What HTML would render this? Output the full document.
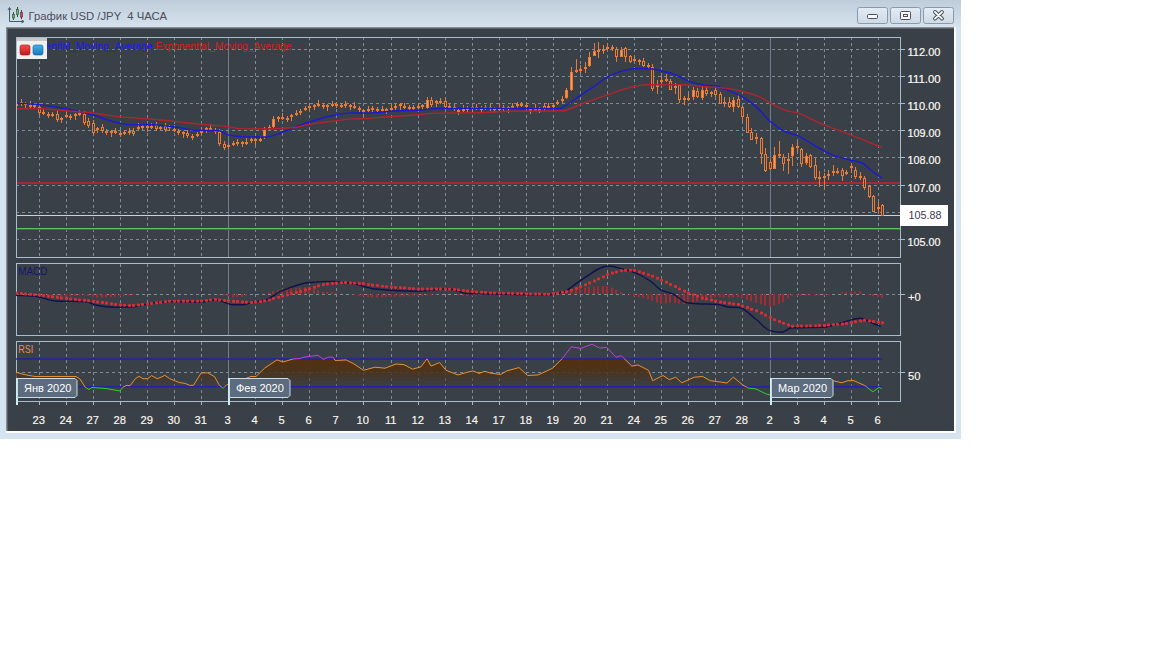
<!DOCTYPE html>
<html><head><meta charset="utf-8"><title>USD/JPY</title>
<style>html,body{margin:0;padding:0;background:#fff;width:1152px;height:648px;overflow:hidden;font-family:"Liberation Sans",sans-serif}</style>
</head><body>
<svg width="1152" height="648" viewBox="0 0 1152 648" style="display:block">
<defs>
<linearGradient id="tb" x1="0" y1="0" x2="0" y2="1"><stop offset="0" stop-color="#bfcdda"/><stop offset="1" stop-color="#d5e2ee"/></linearGradient>
<linearGradient id="btn" x1="0" y1="0" x2="0" y2="1"><stop offset="0" stop-color="#e4ecf4"/><stop offset="1" stop-color="#cdd9e5"/></linearGradient>
<linearGradient id="rsifill" gradientUnits="userSpaceOnUse" x1="0" y1="358" x2="0" y2="387"><stop offset="0" stop-color="#56300c"/><stop offset="0.48" stop-color="#4c3218" stop-opacity="0.88"/><stop offset="1" stop-color="#40383a" stop-opacity="0.2"/></linearGradient>
<linearGradient id="sqr" x1="0" y1="0" x2="0" y2="1"><stop offset="0" stop-color="#f05050"/><stop offset="1" stop-color="#c01818"/></linearGradient>
<linearGradient id="sqb" x1="0" y1="0" x2="0" y2="1"><stop offset="0" stop-color="#40b0e8"/><stop offset="1" stop-color="#1878b8"/></linearGradient>
<clipPath id="cmain"><rect x="16" y="37" width="884" height="220"/></clipPath>
<clipPath id="cmacd"><rect x="16" y="263" width="884" height="72"/></clipPath>
<clipPath id="crsi"><rect x="16" y="341" width="884" height="60"/></clipPath>
<clipPath id="cband"><rect x="16" y="359" width="884" height="28"/></clipPath>
</defs>
<rect x="0" y="0" width="1152" height="648" fill="#ffffff"/>
<rect x="0" y="0" width="961" height="439" fill="#d6e4f1"/>
<rect x="0" y="0" width="961" height="27" fill="url(#tb)"/>
<rect x="6" y="27" width="948" height="404" fill="#3a4048"/>
<rect x="6" y="27" width="948" height="1" fill="#848b92"/>
<rect x="6" y="28" width="948" height="1" fill="#5a6168"/>
<rect x="6" y="27" width="1" height="404" fill="#848b92"/>
<rect x="7" y="28" width="1" height="403" fill="#5a6168"/>
<rect x="954" y="27" width="2" height="406" fill="#ffffff"/>
<rect x="6" y="431" width="950" height="2" fill="#ffffff"/>
<line x1="39.5" y1="37" x2="39.5" y2="257" stroke="#7d8996" stroke-width="1" stroke-dasharray="3,3"/>
<line x1="66.5" y1="37" x2="66.5" y2="257" stroke="#7d8996" stroke-width="1" stroke-dasharray="3,3"/>
<line x1="93.5" y1="37" x2="93.5" y2="257" stroke="#7d8996" stroke-width="1" stroke-dasharray="3,3"/>
<line x1="120.5" y1="37" x2="120.5" y2="257" stroke="#7d8996" stroke-width="1" stroke-dasharray="3,3"/>
<line x1="147.5" y1="37" x2="147.5" y2="257" stroke="#7d8996" stroke-width="1" stroke-dasharray="3,3"/>
<line x1="174.5" y1="37" x2="174.5" y2="257" stroke="#7d8996" stroke-width="1" stroke-dasharray="3,3"/>
<line x1="201.5" y1="37" x2="201.5" y2="257" stroke="#7d8996" stroke-width="1" stroke-dasharray="3,3"/>
<line x1="255.5" y1="37" x2="255.5" y2="257" stroke="#7d8996" stroke-width="1" stroke-dasharray="3,3"/>
<line x1="282.5" y1="37" x2="282.5" y2="257" stroke="#7d8996" stroke-width="1" stroke-dasharray="3,3"/>
<line x1="309.5" y1="37" x2="309.5" y2="257" stroke="#7d8996" stroke-width="1" stroke-dasharray="3,3"/>
<line x1="336.5" y1="37" x2="336.5" y2="257" stroke="#7d8996" stroke-width="1" stroke-dasharray="3,3"/>
<line x1="363.5" y1="37" x2="363.5" y2="257" stroke="#7d8996" stroke-width="1" stroke-dasharray="3,3"/>
<line x1="391.5" y1="37" x2="391.5" y2="257" stroke="#7d8996" stroke-width="1" stroke-dasharray="3,3"/>
<line x1="418.5" y1="37" x2="418.5" y2="257" stroke="#7d8996" stroke-width="1" stroke-dasharray="3,3"/>
<line x1="445.5" y1="37" x2="445.5" y2="257" stroke="#7d8996" stroke-width="1" stroke-dasharray="3,3"/>
<line x1="472.5" y1="37" x2="472.5" y2="257" stroke="#7d8996" stroke-width="1" stroke-dasharray="3,3"/>
<line x1="499.5" y1="37" x2="499.5" y2="257" stroke="#7d8996" stroke-width="1" stroke-dasharray="3,3"/>
<line x1="526.5" y1="37" x2="526.5" y2="257" stroke="#7d8996" stroke-width="1" stroke-dasharray="3,3"/>
<line x1="553.5" y1="37" x2="553.5" y2="257" stroke="#7d8996" stroke-width="1" stroke-dasharray="3,3"/>
<line x1="580.5" y1="37" x2="580.5" y2="257" stroke="#7d8996" stroke-width="1" stroke-dasharray="3,3"/>
<line x1="607.5" y1="37" x2="607.5" y2="257" stroke="#7d8996" stroke-width="1" stroke-dasharray="3,3"/>
<line x1="634.5" y1="37" x2="634.5" y2="257" stroke="#7d8996" stroke-width="1" stroke-dasharray="3,3"/>
<line x1="661.5" y1="37" x2="661.5" y2="257" stroke="#7d8996" stroke-width="1" stroke-dasharray="3,3"/>
<line x1="688.5" y1="37" x2="688.5" y2="257" stroke="#7d8996" stroke-width="1" stroke-dasharray="3,3"/>
<line x1="715.5" y1="37" x2="715.5" y2="257" stroke="#7d8996" stroke-width="1" stroke-dasharray="3,3"/>
<line x1="742.5" y1="37" x2="742.5" y2="257" stroke="#7d8996" stroke-width="1" stroke-dasharray="3,3"/>
<line x1="797.5" y1="37" x2="797.5" y2="257" stroke="#7d8996" stroke-width="1" stroke-dasharray="3,3"/>
<line x1="824.5" y1="37" x2="824.5" y2="257" stroke="#7d8996" stroke-width="1" stroke-dasharray="3,3"/>
<line x1="851.5" y1="37" x2="851.5" y2="257" stroke="#7d8996" stroke-width="1" stroke-dasharray="3,3"/>
<line x1="878.5" y1="37" x2="878.5" y2="257" stroke="#7d8996" stroke-width="1" stroke-dasharray="3,3"/>
<line x1="16" y1="239.5" x2="900" y2="239.5" stroke="#7d8996" stroke-width="1" stroke-dasharray="3,3"/>
<line x1="16" y1="212.5" x2="900" y2="212.5" stroke="#7d8996" stroke-width="1" stroke-dasharray="3,3"/>
<line x1="16" y1="185.5" x2="900" y2="185.5" stroke="#7d8996" stroke-width="1" stroke-dasharray="3,3"/>
<line x1="16" y1="157.5" x2="900" y2="157.5" stroke="#7d8996" stroke-width="1" stroke-dasharray="3,3"/>
<line x1="16" y1="130.5" x2="900" y2="130.5" stroke="#7d8996" stroke-width="1" stroke-dasharray="3,3"/>
<line x1="16" y1="103.5" x2="900" y2="103.5" stroke="#7d8996" stroke-width="1" stroke-dasharray="3,3"/>
<line x1="16" y1="76.5" x2="900" y2="76.5" stroke="#7d8996" stroke-width="1" stroke-dasharray="3,3"/>
<line x1="16" y1="49.5" x2="900" y2="49.5" stroke="#7d8996" stroke-width="1" stroke-dasharray="3,3"/>
<line x1="39.5" y1="264" x2="39.5" y2="335" stroke="#7d8996" stroke-width="1" stroke-dasharray="3,3"/>
<line x1="66.5" y1="264" x2="66.5" y2="335" stroke="#7d8996" stroke-width="1" stroke-dasharray="3,3"/>
<line x1="93.5" y1="264" x2="93.5" y2="335" stroke="#7d8996" stroke-width="1" stroke-dasharray="3,3"/>
<line x1="120.5" y1="264" x2="120.5" y2="335" stroke="#7d8996" stroke-width="1" stroke-dasharray="3,3"/>
<line x1="147.5" y1="264" x2="147.5" y2="335" stroke="#7d8996" stroke-width="1" stroke-dasharray="3,3"/>
<line x1="174.5" y1="264" x2="174.5" y2="335" stroke="#7d8996" stroke-width="1" stroke-dasharray="3,3"/>
<line x1="201.5" y1="264" x2="201.5" y2="335" stroke="#7d8996" stroke-width="1" stroke-dasharray="3,3"/>
<line x1="255.5" y1="264" x2="255.5" y2="335" stroke="#7d8996" stroke-width="1" stroke-dasharray="3,3"/>
<line x1="282.5" y1="264" x2="282.5" y2="335" stroke="#7d8996" stroke-width="1" stroke-dasharray="3,3"/>
<line x1="309.5" y1="264" x2="309.5" y2="335" stroke="#7d8996" stroke-width="1" stroke-dasharray="3,3"/>
<line x1="336.5" y1="264" x2="336.5" y2="335" stroke="#7d8996" stroke-width="1" stroke-dasharray="3,3"/>
<line x1="363.5" y1="264" x2="363.5" y2="335" stroke="#7d8996" stroke-width="1" stroke-dasharray="3,3"/>
<line x1="391.5" y1="264" x2="391.5" y2="335" stroke="#7d8996" stroke-width="1" stroke-dasharray="3,3"/>
<line x1="418.5" y1="264" x2="418.5" y2="335" stroke="#7d8996" stroke-width="1" stroke-dasharray="3,3"/>
<line x1="445.5" y1="264" x2="445.5" y2="335" stroke="#7d8996" stroke-width="1" stroke-dasharray="3,3"/>
<line x1="472.5" y1="264" x2="472.5" y2="335" stroke="#7d8996" stroke-width="1" stroke-dasharray="3,3"/>
<line x1="499.5" y1="264" x2="499.5" y2="335" stroke="#7d8996" stroke-width="1" stroke-dasharray="3,3"/>
<line x1="526.5" y1="264" x2="526.5" y2="335" stroke="#7d8996" stroke-width="1" stroke-dasharray="3,3"/>
<line x1="553.5" y1="264" x2="553.5" y2="335" stroke="#7d8996" stroke-width="1" stroke-dasharray="3,3"/>
<line x1="580.5" y1="264" x2="580.5" y2="335" stroke="#7d8996" stroke-width="1" stroke-dasharray="3,3"/>
<line x1="607.5" y1="264" x2="607.5" y2="335" stroke="#7d8996" stroke-width="1" stroke-dasharray="3,3"/>
<line x1="634.5" y1="264" x2="634.5" y2="335" stroke="#7d8996" stroke-width="1" stroke-dasharray="3,3"/>
<line x1="661.5" y1="264" x2="661.5" y2="335" stroke="#7d8996" stroke-width="1" stroke-dasharray="3,3"/>
<line x1="688.5" y1="264" x2="688.5" y2="335" stroke="#7d8996" stroke-width="1" stroke-dasharray="3,3"/>
<line x1="715.5" y1="264" x2="715.5" y2="335" stroke="#7d8996" stroke-width="1" stroke-dasharray="3,3"/>
<line x1="742.5" y1="264" x2="742.5" y2="335" stroke="#7d8996" stroke-width="1" stroke-dasharray="3,3"/>
<line x1="797.5" y1="264" x2="797.5" y2="335" stroke="#7d8996" stroke-width="1" stroke-dasharray="3,3"/>
<line x1="824.5" y1="264" x2="824.5" y2="335" stroke="#7d8996" stroke-width="1" stroke-dasharray="3,3"/>
<line x1="851.5" y1="264" x2="851.5" y2="335" stroke="#7d8996" stroke-width="1" stroke-dasharray="3,3"/>
<line x1="878.5" y1="264" x2="878.5" y2="335" stroke="#7d8996" stroke-width="1" stroke-dasharray="3,3"/>
<line x1="16" y1="294.5" x2="900" y2="294.5" stroke="#7d8996" stroke-width="1" stroke-dasharray="3,3"/>
<line x1="39.5" y1="342" x2="39.5" y2="401" stroke="#7d8996" stroke-width="1" stroke-dasharray="3,3"/>
<line x1="66.5" y1="342" x2="66.5" y2="401" stroke="#7d8996" stroke-width="1" stroke-dasharray="3,3"/>
<line x1="93.5" y1="342" x2="93.5" y2="401" stroke="#7d8996" stroke-width="1" stroke-dasharray="3,3"/>
<line x1="120.5" y1="342" x2="120.5" y2="401" stroke="#7d8996" stroke-width="1" stroke-dasharray="3,3"/>
<line x1="147.5" y1="342" x2="147.5" y2="401" stroke="#7d8996" stroke-width="1" stroke-dasharray="3,3"/>
<line x1="174.5" y1="342" x2="174.5" y2="401" stroke="#7d8996" stroke-width="1" stroke-dasharray="3,3"/>
<line x1="201.5" y1="342" x2="201.5" y2="401" stroke="#7d8996" stroke-width="1" stroke-dasharray="3,3"/>
<line x1="255.5" y1="342" x2="255.5" y2="401" stroke="#7d8996" stroke-width="1" stroke-dasharray="3,3"/>
<line x1="282.5" y1="342" x2="282.5" y2="401" stroke="#7d8996" stroke-width="1" stroke-dasharray="3,3"/>
<line x1="309.5" y1="342" x2="309.5" y2="401" stroke="#7d8996" stroke-width="1" stroke-dasharray="3,3"/>
<line x1="336.5" y1="342" x2="336.5" y2="401" stroke="#7d8996" stroke-width="1" stroke-dasharray="3,3"/>
<line x1="363.5" y1="342" x2="363.5" y2="401" stroke="#7d8996" stroke-width="1" stroke-dasharray="3,3"/>
<line x1="391.5" y1="342" x2="391.5" y2="401" stroke="#7d8996" stroke-width="1" stroke-dasharray="3,3"/>
<line x1="418.5" y1="342" x2="418.5" y2="401" stroke="#7d8996" stroke-width="1" stroke-dasharray="3,3"/>
<line x1="445.5" y1="342" x2="445.5" y2="401" stroke="#7d8996" stroke-width="1" stroke-dasharray="3,3"/>
<line x1="472.5" y1="342" x2="472.5" y2="401" stroke="#7d8996" stroke-width="1" stroke-dasharray="3,3"/>
<line x1="499.5" y1="342" x2="499.5" y2="401" stroke="#7d8996" stroke-width="1" stroke-dasharray="3,3"/>
<line x1="526.5" y1="342" x2="526.5" y2="401" stroke="#7d8996" stroke-width="1" stroke-dasharray="3,3"/>
<line x1="553.5" y1="342" x2="553.5" y2="401" stroke="#7d8996" stroke-width="1" stroke-dasharray="3,3"/>
<line x1="580.5" y1="342" x2="580.5" y2="401" stroke="#7d8996" stroke-width="1" stroke-dasharray="3,3"/>
<line x1="607.5" y1="342" x2="607.5" y2="401" stroke="#7d8996" stroke-width="1" stroke-dasharray="3,3"/>
<line x1="634.5" y1="342" x2="634.5" y2="401" stroke="#7d8996" stroke-width="1" stroke-dasharray="3,3"/>
<line x1="661.5" y1="342" x2="661.5" y2="401" stroke="#7d8996" stroke-width="1" stroke-dasharray="3,3"/>
<line x1="688.5" y1="342" x2="688.5" y2="401" stroke="#7d8996" stroke-width="1" stroke-dasharray="3,3"/>
<line x1="715.5" y1="342" x2="715.5" y2="401" stroke="#7d8996" stroke-width="1" stroke-dasharray="3,3"/>
<line x1="742.5" y1="342" x2="742.5" y2="401" stroke="#7d8996" stroke-width="1" stroke-dasharray="3,3"/>
<line x1="797.5" y1="342" x2="797.5" y2="401" stroke="#7d8996" stroke-width="1" stroke-dasharray="3,3"/>
<line x1="824.5" y1="342" x2="824.5" y2="401" stroke="#7d8996" stroke-width="1" stroke-dasharray="3,3"/>
<line x1="851.5" y1="342" x2="851.5" y2="401" stroke="#7d8996" stroke-width="1" stroke-dasharray="3,3"/>
<line x1="878.5" y1="342" x2="878.5" y2="401" stroke="#7d8996" stroke-width="1" stroke-dasharray="3,3"/>
<line x1="16" y1="372.5" x2="900" y2="372.5" stroke="#7d8996" stroke-width="1" stroke-dasharray="3,3"/>
<line x1="228.5" y1="38" x2="228.5" y2="257" stroke="#6f7f8f" stroke-width="1"/>
<line x1="228.5" y1="264" x2="228.5" y2="335" stroke="#6f7f8f" stroke-width="1"/>
<line x1="228.5" y1="342" x2="228.5" y2="401" stroke="#6f7f8f" stroke-width="1"/>
<line x1="770.5" y1="38" x2="770.5" y2="257" stroke="#6f7f8f" stroke-width="1"/>
<line x1="770.5" y1="264" x2="770.5" y2="335" stroke="#6f7f8f" stroke-width="1"/>
<line x1="770.5" y1="342" x2="770.5" y2="401" stroke="#6f7f8f" stroke-width="1"/>
<g clip-path="url(#cmain)">
<rect x="16" y="182" width="884" height="2" fill="#a8282e"/>
<rect x="16" y="215" width="884" height="1" fill="#d0d0d0"/>
<rect x="16" y="228" width="884" height="1" fill="#56c656"/>
<rect x="16" y="229" width="884" height="1" fill="#1c8a1c"/>
<rect x="16" y="102" width="1" height="5" fill="#ea7a34"/>
<rect x="15" y="104" width="3" height="2" fill="#ea7a34"/>
<rect x="21" y="99" width="1" height="7" fill="#ea7a34"/>
<rect x="20" y="102" width="3" height="2" fill="#ea7a34"/>
<rect x="25" y="102" width="1" height="6" fill="#ea7a34"/>
<rect x="24" y="103" width="3" height="2" fill="#ea7a34"/>
<rect x="30" y="101" width="1" height="7" fill="#ea7a34"/>
<rect x="29" y="105" width="3" height="2" fill="#ea7a34"/>
<rect x="34" y="103" width="1" height="6" fill="#ea7a34"/>
<rect x="33" y="105" width="3" height="2" fill="#ea7a34"/>
<rect x="39" y="104" width="1" height="11" fill="#ea7a34"/>
<rect x="38.5" y="107.5" width="2" height="5" fill="#3a4048" stroke="#ea7a34" stroke-width="1"/>
<rect x="43" y="109" width="1" height="6" fill="#ea7a34"/>
<rect x="42" y="112" width="3" height="2" fill="#ea7a34"/>
<rect x="48" y="112" width="1" height="6" fill="#ea7a34"/>
<rect x="47" y="114" width="3" height="2" fill="#ea7a34"/>
<rect x="52" y="112" width="1" height="5" fill="#ea7a34"/>
<rect x="51" y="114" width="3" height="2" fill="#ea7a34"/>
<rect x="57" y="111" width="1" height="11" fill="#ea7a34"/>
<rect x="56.5" y="114.5" width="2" height="5" fill="#3a4048" stroke="#ea7a34" stroke-width="1"/>
<rect x="61" y="117" width="1" height="6" fill="#ea7a34"/>
<rect x="60" y="118" width="3" height="2" fill="#ea7a34"/>
<rect x="66" y="111" width="1" height="7" fill="#ea7a34"/>
<rect x="65" y="115" width="3" height="2" fill="#ea7a34"/>
<rect x="70" y="114" width="1" height="6" fill="#ea7a34"/>
<rect x="69" y="116" width="3" height="2" fill="#ea7a34"/>
<rect x="75" y="113" width="1" height="7" fill="#ea7a34"/>
<rect x="74" y="114" width="3" height="2" fill="#ea7a34"/>
<rect x="79" y="110" width="1" height="6" fill="#ea7a34"/>
<rect x="78" y="113" width="3" height="2" fill="#ea7a34"/>
<rect x="84" y="111" width="1" height="14" fill="#ea7a34"/>
<rect x="83.5" y="114.5" width="2" height="8" fill="#3a4048" stroke="#ea7a34" stroke-width="1"/>
<rect x="88" y="118" width="1" height="10" fill="#ea7a34"/>
<rect x="87.5" y="121.5" width="2" height="4" fill="#3a4048" stroke="#ea7a34" stroke-width="1"/>
<rect x="93" y="120" width="1" height="15" fill="#ea7a34"/>
<rect x="92.5" y="123.5" width="2" height="9" fill="#3a4048" stroke="#ea7a34" stroke-width="1"/>
<rect x="97" y="127" width="1" height="6" fill="#ea7a34"/>
<rect x="96" y="128" width="3" height="2" fill="#ea7a34"/>
<rect x="102" y="124" width="1" height="9" fill="#ea7a34"/>
<rect x="101.5" y="127.5" width="2" height="3" fill="#3a4048" stroke="#ea7a34" stroke-width="1"/>
<rect x="106" y="129" width="1" height="6" fill="#ea7a34"/>
<rect x="105" y="131" width="3" height="2" fill="#ea7a34"/>
<rect x="111" y="130" width="1" height="7" fill="#ea7a34"/>
<rect x="110" y="131" width="3" height="2" fill="#ea7a34"/>
<rect x="115" y="128" width="1" height="6" fill="#ea7a34"/>
<rect x="114" y="131" width="3" height="2" fill="#ea7a34"/>
<rect x="120" y="131" width="1" height="6" fill="#ea7a34"/>
<rect x="119" y="133" width="3" height="2" fill="#ea7a34"/>
<rect x="124" y="130" width="1" height="5" fill="#ea7a34"/>
<rect x="123" y="132" width="3" height="2" fill="#ea7a34"/>
<rect x="129" y="128" width="1" height="7" fill="#ea7a34"/>
<rect x="128" y="131" width="3" height="2" fill="#ea7a34"/>
<rect x="133" y="128" width="1" height="8" fill="#ea7a34"/>
<rect x="132.5" y="131.5" width="2" height="2" fill="#3a4048" stroke="#ea7a34" stroke-width="1"/>
<rect x="138" y="123" width="1" height="7" fill="#ea7a34"/>
<rect x="137" y="127" width="3" height="2" fill="#ea7a34"/>
<rect x="142" y="124" width="1" height="6" fill="#ea7a34"/>
<rect x="141" y="126" width="3" height="2" fill="#ea7a34"/>
<rect x="147" y="125" width="1" height="7" fill="#ea7a34"/>
<rect x="146" y="126" width="3" height="2" fill="#ea7a34"/>
<rect x="151" y="123" width="1" height="6" fill="#ea7a34"/>
<rect x="150" y="126" width="3" height="2" fill="#ea7a34"/>
<rect x="156" y="122" width="1" height="9" fill="#ea7a34"/>
<rect x="155.5" y="125.5" width="2" height="3" fill="#3a4048" stroke="#ea7a34" stroke-width="1"/>
<rect x="160" y="125" width="1" height="5" fill="#ea7a34"/>
<rect x="159" y="127" width="3" height="2" fill="#ea7a34"/>
<rect x="165" y="123" width="1" height="9" fill="#ea7a34"/>
<rect x="164.5" y="126.5" width="2" height="3" fill="#3a4048" stroke="#ea7a34" stroke-width="1"/>
<rect x="169" y="125" width="1" height="6" fill="#ea7a34"/>
<rect x="168" y="126" width="3" height="2" fill="#ea7a34"/>
<rect x="174" y="125" width="1" height="7" fill="#ea7a34"/>
<rect x="173" y="129" width="3" height="2" fill="#ea7a34"/>
<rect x="178" y="129" width="1" height="6" fill="#ea7a34"/>
<rect x="177" y="131" width="3" height="2" fill="#ea7a34"/>
<rect x="183" y="131" width="1" height="7" fill="#ea7a34"/>
<rect x="182" y="132" width="3" height="2" fill="#ea7a34"/>
<rect x="187" y="130" width="1" height="8" fill="#ea7a34"/>
<rect x="186.5" y="133.5" width="2" height="2" fill="#3a4048" stroke="#ea7a34" stroke-width="1"/>
<rect x="192" y="134" width="1" height="6" fill="#ea7a34"/>
<rect x="191" y="136" width="3" height="2" fill="#ea7a34"/>
<rect x="197" y="132" width="1" height="5" fill="#ea7a34"/>
<rect x="196" y="134" width="3" height="2" fill="#ea7a34"/>
<rect x="201" y="128" width="1" height="7" fill="#ea7a34"/>
<rect x="200" y="131" width="3" height="2" fill="#ea7a34"/>
<rect x="206" y="127" width="1" height="6" fill="#ea7a34"/>
<rect x="205" y="128" width="3" height="2" fill="#ea7a34"/>
<rect x="210" y="124" width="1" height="7" fill="#ea7a34"/>
<rect x="209" y="128" width="3" height="2" fill="#ea7a34"/>
<rect x="215" y="128" width="1" height="6" fill="#ea7a34"/>
<rect x="214" y="130" width="3" height="2" fill="#ea7a34"/>
<rect x="219" y="129" width="1" height="17" fill="#ea7a34"/>
<rect x="218.5" y="132.5" width="2" height="11" fill="#3a4048" stroke="#ea7a34" stroke-width="1"/>
<rect x="224" y="141" width="1" height="9" fill="#ea7a34"/>
<rect x="223.5" y="144.5" width="2" height="3" fill="#3a4048" stroke="#ea7a34" stroke-width="1"/>
<rect x="228" y="143" width="1" height="6" fill="#ea7a34"/>
<rect x="227" y="145" width="3" height="2" fill="#ea7a34"/>
<rect x="233" y="141" width="1" height="5" fill="#ea7a34"/>
<rect x="232" y="143" width="3" height="2" fill="#ea7a34"/>
<rect x="237" y="139" width="1" height="7" fill="#ea7a34"/>
<rect x="236" y="142" width="3" height="2" fill="#ea7a34"/>
<rect x="242" y="141" width="1" height="6" fill="#ea7a34"/>
<rect x="241" y="142" width="3" height="2" fill="#ea7a34"/>
<rect x="246" y="138" width="1" height="7" fill="#ea7a34"/>
<rect x="245" y="142" width="3" height="2" fill="#ea7a34"/>
<rect x="251" y="137" width="1" height="6" fill="#ea7a34"/>
<rect x="250" y="139" width="3" height="2" fill="#ea7a34"/>
<rect x="255" y="138" width="1" height="7" fill="#ea7a34"/>
<rect x="254" y="139" width="3" height="2" fill="#ea7a34"/>
<rect x="260" y="136" width="1" height="6" fill="#ea7a34"/>
<rect x="259" y="139" width="3" height="2" fill="#ea7a34"/>
<rect x="264" y="127" width="1" height="12" fill="#ea7a34"/>
<rect x="263.5" y="130.5" width="2" height="6" fill="#f89a58" stroke="#ea7a34" stroke-width="1"/>
<rect x="269" y="125" width="1" height="5" fill="#ea7a34"/>
<rect x="268" y="127" width="3" height="2" fill="#ea7a34"/>
<rect x="273" y="116" width="1" height="13" fill="#ea7a34"/>
<rect x="272.5" y="119.5" width="2" height="7" fill="#f89a58" stroke="#ea7a34" stroke-width="1"/>
<rect x="278" y="116" width="1" height="6" fill="#ea7a34"/>
<rect x="277" y="117" width="3" height="2" fill="#ea7a34"/>
<rect x="282" y="113" width="1" height="7" fill="#ea7a34"/>
<rect x="281" y="117" width="3" height="2" fill="#ea7a34"/>
<rect x="287" y="116" width="1" height="6" fill="#ea7a34"/>
<rect x="286" y="118" width="3" height="2" fill="#ea7a34"/>
<rect x="291" y="114" width="1" height="7" fill="#ea7a34"/>
<rect x="290" y="115" width="3" height="2" fill="#ea7a34"/>
<rect x="296" y="110" width="1" height="6" fill="#ea7a34"/>
<rect x="295" y="113" width="3" height="2" fill="#ea7a34"/>
<rect x="300" y="109" width="1" height="6" fill="#ea7a34"/>
<rect x="299" y="111" width="3" height="2" fill="#ea7a34"/>
<rect x="305" y="106" width="1" height="5" fill="#ea7a34"/>
<rect x="304" y="108" width="3" height="2" fill="#ea7a34"/>
<rect x="309" y="103" width="1" height="7" fill="#ea7a34"/>
<rect x="308" y="106" width="3" height="2" fill="#ea7a34"/>
<rect x="314" y="104" width="1" height="6" fill="#ea7a34"/>
<rect x="313" y="105" width="3" height="2" fill="#ea7a34"/>
<rect x="318" y="100" width="1" height="7" fill="#ea7a34"/>
<rect x="317" y="104" width="3" height="2" fill="#ea7a34"/>
<rect x="323" y="103" width="1" height="6" fill="#ea7a34"/>
<rect x="322" y="105" width="3" height="2" fill="#ea7a34"/>
<rect x="327" y="104" width="1" height="7" fill="#ea7a34"/>
<rect x="326" y="105" width="3" height="2" fill="#ea7a34"/>
<rect x="332" y="101" width="1" height="6" fill="#ea7a34"/>
<rect x="331" y="104" width="3" height="2" fill="#ea7a34"/>
<rect x="336" y="102" width="1" height="6" fill="#ea7a34"/>
<rect x="335" y="104" width="3" height="2" fill="#ea7a34"/>
<rect x="341" y="103" width="1" height="5" fill="#ea7a34"/>
<rect x="340" y="105" width="3" height="2" fill="#ea7a34"/>
<rect x="345" y="101" width="1" height="7" fill="#ea7a34"/>
<rect x="344" y="104" width="3" height="2" fill="#ea7a34"/>
<rect x="350" y="104" width="1" height="6" fill="#ea7a34"/>
<rect x="349" y="105" width="3" height="2" fill="#ea7a34"/>
<rect x="354" y="102" width="1" height="7" fill="#ea7a34"/>
<rect x="353" y="106" width="3" height="2" fill="#ea7a34"/>
<rect x="359" y="106" width="1" height="6" fill="#ea7a34"/>
<rect x="358" y="108" width="3" height="2" fill="#ea7a34"/>
<rect x="363" y="109" width="1" height="7" fill="#ea7a34"/>
<rect x="362" y="110" width="3" height="2" fill="#ea7a34"/>
<rect x="368" y="106" width="1" height="6" fill="#ea7a34"/>
<rect x="367" y="109" width="3" height="2" fill="#ea7a34"/>
<rect x="372" y="106" width="1" height="6" fill="#ea7a34"/>
<rect x="371" y="108" width="3" height="2" fill="#ea7a34"/>
<rect x="377" y="107" width="1" height="5" fill="#ea7a34"/>
<rect x="376" y="109" width="3" height="2" fill="#ea7a34"/>
<rect x="382" y="106" width="1" height="7" fill="#ea7a34"/>
<rect x="381" y="109" width="3" height="2" fill="#ea7a34"/>
<rect x="386" y="108" width="1" height="6" fill="#ea7a34"/>
<rect x="385" y="109" width="3" height="2" fill="#ea7a34"/>
<rect x="391" y="104" width="1" height="7" fill="#ea7a34"/>
<rect x="390" y="108" width="3" height="2" fill="#ea7a34"/>
<rect x="395" y="104" width="1" height="6" fill="#ea7a34"/>
<rect x="394" y="106" width="3" height="2" fill="#ea7a34"/>
<rect x="400" y="103" width="1" height="7" fill="#ea7a34"/>
<rect x="399" y="104" width="3" height="2" fill="#ea7a34"/>
<rect x="404" y="103" width="1" height="6" fill="#ea7a34"/>
<rect x="403" y="106" width="3" height="2" fill="#ea7a34"/>
<rect x="409" y="105" width="1" height="6" fill="#ea7a34"/>
<rect x="408" y="107" width="3" height="2" fill="#ea7a34"/>
<rect x="413" y="105" width="1" height="5" fill="#ea7a34"/>
<rect x="412" y="107" width="3" height="2" fill="#ea7a34"/>
<rect x="418" y="103" width="1" height="7" fill="#ea7a34"/>
<rect x="417" y="106" width="3" height="2" fill="#ea7a34"/>
<rect x="422" y="104" width="1" height="6" fill="#ea7a34"/>
<rect x="421" y="105" width="3" height="2" fill="#ea7a34"/>
<rect x="427" y="97" width="1" height="13" fill="#ea7a34"/>
<rect x="426.5" y="100.5" width="2" height="7" fill="#f89a58" stroke="#ea7a34" stroke-width="1"/>
<rect x="431" y="97" width="1" height="10" fill="#ea7a34"/>
<rect x="430.5" y="100.5" width="2" height="4" fill="#3a4048" stroke="#ea7a34" stroke-width="1"/>
<rect x="436" y="100" width="1" height="7" fill="#ea7a34"/>
<rect x="435" y="101" width="3" height="2" fill="#ea7a34"/>
<rect x="440" y="98" width="1" height="6" fill="#ea7a34"/>
<rect x="439" y="101" width="3" height="2" fill="#ea7a34"/>
<rect x="445" y="98" width="1" height="11" fill="#ea7a34"/>
<rect x="444.5" y="101.5" width="2" height="5" fill="#3a4048" stroke="#ea7a34" stroke-width="1"/>
<rect x="449" y="104" width="1" height="5" fill="#ea7a34"/>
<rect x="448" y="106" width="3" height="2" fill="#ea7a34"/>
<rect x="454" y="104" width="1" height="7" fill="#ea7a34"/>
<rect x="453" y="107" width="3" height="2" fill="#ea7a34"/>
<rect x="458" y="109" width="1" height="6" fill="#ea7a34"/>
<rect x="457" y="110" width="3" height="2" fill="#ea7a34"/>
<rect x="463" y="105" width="1" height="7" fill="#ea7a34"/>
<rect x="462" y="109" width="3" height="2" fill="#ea7a34"/>
<rect x="467" y="106" width="1" height="6" fill="#ea7a34"/>
<rect x="466" y="108" width="3" height="2" fill="#ea7a34"/>
<rect x="472" y="106" width="1" height="7" fill="#ea7a34"/>
<rect x="471" y="107" width="3" height="2" fill="#ea7a34"/>
<rect x="476" y="104" width="1" height="6" fill="#ea7a34"/>
<rect x="475" y="107" width="3" height="2" fill="#ea7a34"/>
<rect x="481" y="106" width="1" height="6" fill="#ea7a34"/>
<rect x="480" y="108" width="3" height="2" fill="#ea7a34"/>
<rect x="485" y="105" width="1" height="5" fill="#ea7a34"/>
<rect x="484" y="107" width="3" height="2" fill="#ea7a34"/>
<rect x="490" y="104" width="1" height="7" fill="#ea7a34"/>
<rect x="489" y="107" width="3" height="2" fill="#ea7a34"/>
<rect x="494" y="107" width="1" height="6" fill="#ea7a34"/>
<rect x="493" y="108" width="3" height="2" fill="#ea7a34"/>
<rect x="499" y="104" width="1" height="7" fill="#ea7a34"/>
<rect x="498" y="108" width="3" height="2" fill="#ea7a34"/>
<rect x="503" y="105" width="1" height="6" fill="#ea7a34"/>
<rect x="502" y="107" width="3" height="2" fill="#ea7a34"/>
<rect x="508" y="106" width="1" height="7" fill="#ea7a34"/>
<rect x="507" y="107" width="3" height="2" fill="#ea7a34"/>
<rect x="512" y="103" width="1" height="6" fill="#ea7a34"/>
<rect x="511" y="106" width="3" height="2" fill="#ea7a34"/>
<rect x="517" y="102" width="1" height="6" fill="#ea7a34"/>
<rect x="516" y="104" width="3" height="2" fill="#ea7a34"/>
<rect x="521" y="102" width="1" height="5" fill="#ea7a34"/>
<rect x="520" y="104" width="3" height="2" fill="#ea7a34"/>
<rect x="526" y="102" width="1" height="7" fill="#ea7a34"/>
<rect x="525" y="105" width="3" height="2" fill="#ea7a34"/>
<rect x="530" y="108" width="1" height="6" fill="#ea7a34"/>
<rect x="529" y="109" width="3" height="2" fill="#ea7a34"/>
<rect x="535" y="104" width="1" height="7" fill="#ea7a34"/>
<rect x="534" y="108" width="3" height="2" fill="#ea7a34"/>
<rect x="539" y="107" width="1" height="6" fill="#ea7a34"/>
<rect x="538" y="109" width="3" height="2" fill="#ea7a34"/>
<rect x="544" y="103" width="1" height="8" fill="#ea7a34"/>
<rect x="543.5" y="106.5" width="2" height="2" fill="#3a4048" stroke="#ea7a34" stroke-width="1"/>
<rect x="548" y="103" width="1" height="6" fill="#ea7a34"/>
<rect x="547" y="106" width="3" height="2" fill="#ea7a34"/>
<rect x="553" y="103" width="1" height="6" fill="#ea7a34"/>
<rect x="552" y="105" width="3" height="2" fill="#ea7a34"/>
<rect x="557" y="100" width="1" height="5" fill="#ea7a34"/>
<rect x="556" y="102" width="3" height="2" fill="#ea7a34"/>
<rect x="562" y="96" width="1" height="7" fill="#ea7a34"/>
<rect x="561" y="99" width="3" height="2" fill="#ea7a34"/>
<rect x="566" y="88" width="1" height="11" fill="#ea7a34"/>
<rect x="565.5" y="90.5" width="2" height="7" fill="#f89a58" stroke="#ea7a34" stroke-width="1"/>
<rect x="571" y="67" width="1" height="24" fill="#ea7a34"/>
<rect x="570.5" y="72.5" width="2" height="17" fill="#f89a58" stroke="#ea7a34" stroke-width="1"/>
<rect x="576" y="59" width="1" height="14" fill="#ea7a34"/>
<rect x="575" y="70" width="3" height="2" fill="#ea7a34"/>
<rect x="580" y="65" width="1" height="8" fill="#ea7a34"/>
<rect x="579" y="69" width="3" height="2" fill="#ea7a34"/>
<rect x="585" y="62" width="1" height="11" fill="#ea7a34"/>
<rect x="584" y="67" width="3" height="2" fill="#ea7a34"/>
<rect x="589" y="52" width="1" height="15" fill="#ea7a34"/>
<rect x="588.5" y="57.5" width="2" height="8" fill="#f89a58" stroke="#ea7a34" stroke-width="1"/>
<rect x="594" y="43" width="1" height="13" fill="#ea7a34"/>
<rect x="593.5" y="51.5" width="2" height="4" fill="#f89a58" stroke="#ea7a34" stroke-width="1"/>
<rect x="598" y="42" width="1" height="16" fill="#ea7a34"/>
<rect x="597" y="50" width="3" height="2" fill="#ea7a34"/>
<rect x="603" y="45" width="1" height="9" fill="#ea7a34"/>
<rect x="602" y="49" width="3" height="2" fill="#ea7a34"/>
<rect x="607" y="43" width="1" height="7" fill="#ea7a34"/>
<rect x="606" y="47" width="3" height="2" fill="#ea7a34"/>
<rect x="612" y="45" width="1" height="6" fill="#ea7a34"/>
<rect x="611" y="47" width="3" height="2" fill="#ea7a34"/>
<rect x="616" y="47" width="1" height="15" fill="#ea7a34"/>
<rect x="615.5" y="49.5" width="2" height="7" fill="#3a4048" stroke="#ea7a34" stroke-width="1"/>
<rect x="621" y="47" width="1" height="10" fill="#ea7a34"/>
<rect x="620.5" y="50.5" width="2" height="6" fill="#f89a58" stroke="#ea7a34" stroke-width="1"/>
<rect x="625" y="47" width="1" height="15" fill="#ea7a34"/>
<rect x="624.5" y="48.5" width="2" height="8" fill="#3a4048" stroke="#ea7a34" stroke-width="1"/>
<rect x="630" y="55" width="1" height="8" fill="#ea7a34"/>
<rect x="629.5" y="56.5" width="2" height="5" fill="#3a4048" stroke="#ea7a34" stroke-width="1"/>
<rect x="634" y="57" width="1" height="5" fill="#ea7a34"/>
<rect x="633" y="59" width="3" height="2" fill="#ea7a34"/>
<rect x="639" y="59" width="1" height="6" fill="#ea7a34"/>
<rect x="638" y="60" width="3" height="2" fill="#ea7a34"/>
<rect x="643" y="58" width="1" height="9" fill="#ea7a34"/>
<rect x="642.5" y="61.5" width="2" height="4" fill="#3a4048" stroke="#ea7a34" stroke-width="1"/>
<rect x="648" y="63" width="1" height="6" fill="#ea7a34"/>
<rect x="647" y="65" width="3" height="2" fill="#ea7a34"/>
<rect x="652" y="64" width="1" height="27" fill="#ea7a34"/>
<rect x="651.5" y="67.5" width="2" height="21" fill="#3a4048" stroke="#ea7a34" stroke-width="1"/>
<rect x="657" y="80" width="1" height="14" fill="#ea7a34"/>
<rect x="656" y="85" width="3" height="2" fill="#ea7a34"/>
<rect x="661" y="76" width="1" height="9" fill="#ea7a34"/>
<rect x="660" y="80" width="3" height="2" fill="#ea7a34"/>
<rect x="666" y="74" width="1" height="8" fill="#ea7a34"/>
<rect x="665" y="79" width="3" height="2" fill="#ea7a34"/>
<rect x="670" y="79" width="1" height="11" fill="#ea7a34"/>
<rect x="669.5" y="81.5" width="2" height="8" fill="#3a4048" stroke="#ea7a34" stroke-width="1"/>
<rect x="675" y="83" width="1" height="11" fill="#ea7a34"/>
<rect x="674" y="86" width="3" height="2" fill="#ea7a34"/>
<rect x="679" y="84" width="1" height="19" fill="#ea7a34"/>
<rect x="678.5" y="85.5" width="2" height="14" fill="#3a4048" stroke="#ea7a34" stroke-width="1"/>
<rect x="684" y="96" width="1" height="9" fill="#ea7a34"/>
<rect x="683" y="98" width="3" height="2" fill="#ea7a34"/>
<rect x="688" y="93" width="1" height="8" fill="#ea7a34"/>
<rect x="687" y="98" width="3" height="2" fill="#ea7a34"/>
<rect x="693" y="87" width="1" height="13" fill="#ea7a34"/>
<rect x="692.5" y="90.5" width="2" height="6" fill="#f89a58" stroke="#ea7a34" stroke-width="1"/>
<rect x="697" y="88" width="1" height="10" fill="#ea7a34"/>
<rect x="696.5" y="91.5" width="2" height="5" fill="#3a4048" stroke="#ea7a34" stroke-width="1"/>
<rect x="702" y="86" width="1" height="14" fill="#ea7a34"/>
<rect x="701.5" y="90.5" width="2" height="7" fill="#f89a58" stroke="#ea7a34" stroke-width="1"/>
<rect x="706" y="87" width="1" height="9" fill="#ea7a34"/>
<rect x="705.5" y="90.5" width="2" height="3" fill="#3a4048" stroke="#ea7a34" stroke-width="1"/>
<rect x="711" y="91" width="1" height="6" fill="#ea7a34"/>
<rect x="710" y="92" width="3" height="2" fill="#ea7a34"/>
<rect x="715" y="87" width="1" height="10" fill="#ea7a34"/>
<rect x="714.5" y="90.5" width="2" height="4" fill="#3a4048" stroke="#ea7a34" stroke-width="1"/>
<rect x="720" y="92" width="1" height="12" fill="#ea7a34"/>
<rect x="719.5" y="94.5" width="2" height="9" fill="#3a4048" stroke="#ea7a34" stroke-width="1"/>
<rect x="724" y="97" width="1" height="10" fill="#ea7a34"/>
<rect x="723" y="102" width="3" height="2" fill="#ea7a34"/>
<rect x="729" y="97" width="1" height="11" fill="#ea7a34"/>
<rect x="728.5" y="102.5" width="2" height="4" fill="#3a4048" stroke="#ea7a34" stroke-width="1"/>
<rect x="733" y="97" width="1" height="15" fill="#ea7a34"/>
<rect x="732.5" y="100.5" width="2" height="6" fill="#f89a58" stroke="#ea7a34" stroke-width="1"/>
<rect x="738" y="94" width="1" height="14" fill="#ea7a34"/>
<rect x="737.5" y="99.5" width="2" height="7" fill="#3a4048" stroke="#ea7a34" stroke-width="1"/>
<rect x="742" y="106" width="1" height="16" fill="#ea7a34"/>
<rect x="741.5" y="107.5" width="2" height="9" fill="#3a4048" stroke="#ea7a34" stroke-width="1"/>
<rect x="747" y="114" width="1" height="19" fill="#ea7a34"/>
<rect x="746.5" y="117.5" width="2" height="15" fill="#3a4048" stroke="#ea7a34" stroke-width="1"/>
<rect x="751" y="128" width="1" height="12" fill="#ea7a34"/>
<rect x="750.5" y="132.5" width="2" height="7" fill="#3a4048" stroke="#ea7a34" stroke-width="1"/>
<rect x="756" y="133" width="1" height="11" fill="#ea7a34"/>
<rect x="755" y="137" width="3" height="2" fill="#ea7a34"/>
<rect x="761" y="137" width="1" height="27" fill="#ea7a34"/>
<rect x="760.5" y="138.5" width="2" height="15" fill="#3a4048" stroke="#ea7a34" stroke-width="1"/>
<rect x="765" y="148" width="1" height="24" fill="#ea7a34"/>
<rect x="764.5" y="154.5" width="2" height="16" fill="#3a4048" stroke="#ea7a34" stroke-width="1"/>
<rect x="770" y="160" width="1" height="10" fill="#ea7a34"/>
<rect x="769.5" y="162.5" width="2" height="6" fill="#3a4048" stroke="#ea7a34" stroke-width="1"/>
<rect x="774" y="147" width="1" height="22" fill="#ea7a34"/>
<rect x="773.5" y="155.5" width="2" height="13" fill="#f89a58" stroke="#ea7a34" stroke-width="1"/>
<rect x="779" y="141" width="1" height="17" fill="#ea7a34"/>
<rect x="778" y="154" width="3" height="2" fill="#ea7a34"/>
<rect x="783" y="154" width="1" height="17" fill="#ea7a34"/>
<rect x="782.5" y="157.5" width="2" height="6" fill="#3a4048" stroke="#ea7a34" stroke-width="1"/>
<rect x="788" y="153" width="1" height="21" fill="#ea7a34"/>
<rect x="787" y="159" width="3" height="2" fill="#ea7a34"/>
<rect x="792" y="144" width="1" height="22" fill="#ea7a34"/>
<rect x="791.5" y="147.5" width="2" height="8" fill="#f89a58" stroke="#ea7a34" stroke-width="1"/>
<rect x="797" y="142" width="1" height="10" fill="#ea7a34"/>
<rect x="796" y="146" width="3" height="2" fill="#ea7a34"/>
<rect x="801" y="148" width="1" height="19" fill="#ea7a34"/>
<rect x="800.5" y="149.5" width="2" height="14" fill="#3a4048" stroke="#ea7a34" stroke-width="1"/>
<rect x="806" y="153" width="1" height="12" fill="#ea7a34"/>
<rect x="805.5" y="156.5" width="2" height="6" fill="#f89a58" stroke="#ea7a34" stroke-width="1"/>
<rect x="810" y="154" width="1" height="14" fill="#ea7a34"/>
<rect x="809.5" y="155.5" width="2" height="11" fill="#3a4048" stroke="#ea7a34" stroke-width="1"/>
<rect x="815" y="158" width="1" height="22" fill="#ea7a34"/>
<rect x="814.5" y="165.5" width="2" height="12" fill="#3a4048" stroke="#ea7a34" stroke-width="1"/>
<rect x="819" y="171" width="1" height="16" fill="#ea7a34"/>
<rect x="818" y="177" width="3" height="2" fill="#ea7a34"/>
<rect x="824" y="173" width="1" height="16" fill="#ea7a34"/>
<rect x="823" y="176" width="3" height="2" fill="#ea7a34"/>
<rect x="828" y="170" width="1" height="10" fill="#ea7a34"/>
<rect x="827" y="174" width="3" height="2" fill="#ea7a34"/>
<rect x="833" y="165" width="1" height="11" fill="#ea7a34"/>
<rect x="832" y="171" width="3" height="2" fill="#ea7a34"/>
<rect x="837" y="168" width="1" height="6" fill="#ea7a34"/>
<rect x="836" y="171" width="3" height="2" fill="#ea7a34"/>
<rect x="842" y="168" width="1" height="13" fill="#ea7a34"/>
<rect x="841.5" y="170.5" width="2" height="5" fill="#3a4048" stroke="#ea7a34" stroke-width="1"/>
<rect x="846" y="170" width="1" height="5" fill="#ea7a34"/>
<rect x="845" y="172" width="3" height="2" fill="#ea7a34"/>
<rect x="851" y="163" width="1" height="10" fill="#ea7a34"/>
<rect x="850" y="166" width="3" height="2" fill="#ea7a34"/>
<rect x="855" y="167" width="1" height="12" fill="#ea7a34"/>
<rect x="854.5" y="170.5" width="2" height="6" fill="#3a4048" stroke="#ea7a34" stroke-width="1"/>
<rect x="860" y="172" width="1" height="8" fill="#ea7a34"/>
<rect x="859" y="176" width="3" height="2" fill="#ea7a34"/>
<rect x="864" y="176" width="1" height="14" fill="#ea7a34"/>
<rect x="863.5" y="178.5" width="2" height="9" fill="#3a4048" stroke="#ea7a34" stroke-width="1"/>
<rect x="869" y="185" width="1" height="13" fill="#ea7a34"/>
<rect x="868.5" y="186.5" width="2" height="10" fill="#3a4048" stroke="#ea7a34" stroke-width="1"/>
<rect x="873" y="195" width="1" height="17" fill="#ea7a34"/>
<rect x="872.5" y="196.5" width="2" height="15" fill="#3a4048" stroke="#ea7a34" stroke-width="1"/>
<rect x="878" y="202" width="1" height="11" fill="#ea7a34"/>
<rect x="877" y="207" width="3" height="2" fill="#ea7a34"/>
<rect x="882" y="204" width="1" height="12" fill="#ea7a34"/>
<rect x="881.5" y="205.5" width="2" height="10" fill="#3a4048" stroke="#ea7a34" stroke-width="1"/>
<path d="M16.0,103.0 C23.7,103.5 31.3,103.9 39.0,104.6 C48.0,105.5 57.0,107.1 66.0,108.8 C75.0,110.4 84.0,112.6 93.0,115.0 C102.0,117.4 111.0,121.8 120.0,123.3 C124.7,124.1 129.3,124.9 134.0,124.9 C138.3,124.9 142.7,124.5 147.0,124.5 C155.3,124.5 163.7,125.9 172.0,126.7 C174.7,127.0 177.3,127.2 180.0,127.6 C185.7,128.4 191.3,130.3 197.0,130.4 C204.3,130.6 211.7,130.5 219.0,130.7 C222.0,130.8 225.0,134.3 228.0,134.9 C232.0,135.7 236.0,136.2 240.0,136.5 C243.3,136.7 246.7,137.0 250.0,137.0 C255.3,137.0 260.7,137.0 266.0,137.0 C271.3,137.0 276.7,134.1 282.0,132.4 C290.7,129.6 299.3,125.3 308.0,122.5 C316.7,119.7 325.3,116.8 334.0,115.2 C339.3,114.2 344.7,112.9 350.0,112.9 C356.7,112.9 363.3,113.1 370.0,113.1 C377.3,113.1 384.7,111.7 392.0,111.2 C403.0,110.6 414.0,110.4 425.0,109.7 C428.3,109.5 431.7,108.6 435.0,108.6 C450.0,108.4 465.0,108.3 480.0,108.3 C506.3,108.3 532.7,108.6 559.0,108.6 C561.0,108.6 563.0,107.1 565.0,106.0 C570.0,103.3 575.0,99.0 580.0,95.6 C583.3,93.4 586.7,91.3 590.0,89.1 C592.0,87.8 594.0,86.6 596.0,85.2 C599.7,82.7 603.3,78.9 607.0,77.1 C614.0,73.7 621.0,70.7 628.0,69.6 C631.7,69.0 635.3,68.5 639.0,68.5 C643.3,68.5 647.7,68.7 652.0,69.0 C655.7,69.2 659.3,70.3 663.0,71.2 C667.3,72.2 671.7,73.4 676.0,75.0 C680.3,76.6 684.7,80.0 689.0,81.4 C694.3,83.1 699.7,84.5 705.0,85.1 C708.3,85.5 711.7,85.4 715.0,85.8 C719.3,86.3 723.7,88.7 728.0,90.4 C732.7,92.2 737.3,94.0 742.0,96.6 C746.7,99.2 751.3,102.6 756.0,106.6 C760.7,110.6 765.3,117.5 770.0,121.3 C775.3,125.7 780.7,129.8 786.0,132.0 C789.7,133.5 793.3,133.8 797.0,135.2 C800.3,136.5 803.7,139.1 807.0,141.0 C812.7,144.3 818.3,147.8 824.0,150.8 C827.3,152.6 830.7,154.5 834.0,155.7 C839.0,157.4 844.0,158.4 849.0,159.7 C853.3,160.8 857.7,161.3 862.0,163.0 C865.0,164.2 868.0,167.9 871.0,170.2 C874.7,173.0 878.3,175.6 882.0,178.3" fill="none" stroke="#1a1ad0" stroke-width="1.4"/>
<path d="M16.0,108.8 C23.7,108.8 31.3,108.8 39.0,108.8 C48.0,108.8 57.0,110.1 66.0,110.8 C75.0,111.5 84.0,112.1 93.0,113.0 C102.0,113.9 111.0,116.1 120.0,116.9 C124.7,117.3 129.3,117.5 134.0,117.8 C143.7,118.5 153.3,119.4 163.0,120.3 C170.7,121.0 178.3,121.9 186.0,122.7 C193.7,123.5 201.3,124.3 209.0,125.0 C215.3,125.6 221.7,125.9 228.0,126.6 C232.0,127.0 236.0,128.3 240.0,128.6 C243.3,128.8 246.7,129.0 250.0,129.0 C255.7,129.0 261.3,128.9 267.0,128.8 C275.7,128.6 284.3,128.3 293.0,127.7 C298.0,127.4 303.0,125.4 308.0,124.6 C316.7,123.2 325.3,122.1 334.0,121.0 C340.0,120.2 346.0,119.1 352.0,118.9 C356.7,118.7 361.3,118.8 366.0,118.6 C372.0,118.4 378.0,117.5 384.0,117.0 C394.7,116.2 405.3,115.7 416.0,114.9 C423.3,114.4 430.7,113.2 438.0,113.1 C451.3,112.9 464.7,113.0 478.0,112.8 C488.3,112.7 498.7,111.4 509.0,111.2 C527.0,110.9 545.0,111.1 563.0,110.7 C568.7,110.6 574.3,106.6 580.0,104.5 C583.3,103.3 586.7,102.1 590.0,100.9 C597.3,98.3 604.7,95.7 612.0,93.3 C619.0,91.0 626.0,88.3 633.0,86.8 C637.3,85.9 641.7,84.7 646.0,84.7 C658.0,84.7 670.0,84.7 682.0,84.7 C689.7,84.7 697.3,86.1 705.0,86.7 C711.7,87.2 718.3,87.4 725.0,88.1 C730.7,88.7 736.3,89.9 742.0,91.2 C747.7,92.5 753.3,94.3 759.0,96.6 C762.7,98.1 766.3,100.9 770.0,102.8 C775.3,105.6 780.7,108.9 786.0,110.5 C790.3,111.8 794.7,112.0 799.0,113.3 C803.7,114.7 808.3,117.8 813.0,120.0 C816.7,121.7 820.3,123.4 824.0,124.9 C832.7,128.4 841.3,131.2 850.0,134.6 C856.0,136.9 862.0,139.5 868.0,141.9 C872.7,143.8 877.3,145.7 882.0,147.6" fill="none" stroke="#b0242e" stroke-width="1.4"/>
</g>
<text x="16.5" y="49.6" font-family="Liberation Sans, sans-serif" font-size="11.2" textLength="136" lengthAdjust="spacingAndGlyphs" fill="#1a1ae8">Exponential_Moving_Average</text>
<text x="155.5" y="49.6" font-family="Liberation Sans, sans-serif" font-size="11.2" textLength="136" lengthAdjust="spacingAndGlyphs" fill="#d02020">Exponential_Moving_Average</text>
<rect x="16" y="37" width="31" height="22" fill="#f0f0f0"/>
<rect x="16" y="37" width="31" height="4" fill="#c8c8c8"/>
<rect x="20" y="45" width="10" height="10" rx="2" fill="url(#sqr)" stroke="#a01010" stroke-width="0.6"/>
<rect x="33" y="45" width="10" height="10" rx="2" fill="url(#sqb)" stroke="#10609a" stroke-width="0.6"/>
<rect x="16.5" y="37.5" width="884" height="220" fill="none" stroke="#a9bccd" stroke-width="1"/>
<rect x="16.5" y="263.5" width="884" height="72" fill="none" stroke="#a9bccd" stroke-width="1"/>
<rect x="16.5" y="341.5" width="884" height="60" fill="none" stroke="#a9bccd" stroke-width="1"/>
<line x1="900" y1="239.5" x2="905" y2="239.5" stroke="#a9bccd"/>
<line x1="900" y1="212.5" x2="905" y2="212.5" stroke="#a9bccd"/>
<line x1="900" y1="185.5" x2="905" y2="185.5" stroke="#a9bccd"/>
<line x1="900" y1="157.5" x2="905" y2="157.5" stroke="#a9bccd"/>
<line x1="900" y1="130.5" x2="905" y2="130.5" stroke="#a9bccd"/>
<line x1="900" y1="103.5" x2="905" y2="103.5" stroke="#a9bccd"/>
<line x1="900" y1="76.5" x2="905" y2="76.5" stroke="#a9bccd"/>
<line x1="900" y1="49.5" x2="905" y2="49.5" stroke="#a9bccd"/>
<line x1="900" y1="294.5" x2="905" y2="294.5" stroke="#a9bccd"/>
<line x1="900" y1="372.5" x2="905" y2="372.5" stroke="#a9bccd"/>
<line x1="39.5" y1="401" x2="39.5" y2="405" stroke="#a9bccd"/>
<line x1="66.5" y1="401" x2="66.5" y2="405" stroke="#a9bccd"/>
<line x1="93.5" y1="401" x2="93.5" y2="405" stroke="#a9bccd"/>
<line x1="120.5" y1="401" x2="120.5" y2="405" stroke="#a9bccd"/>
<line x1="147.5" y1="401" x2="147.5" y2="405" stroke="#a9bccd"/>
<line x1="174.5" y1="401" x2="174.5" y2="405" stroke="#a9bccd"/>
<line x1="201.5" y1="401" x2="201.5" y2="405" stroke="#a9bccd"/>
<line x1="228.5" y1="401" x2="228.5" y2="405" stroke="#a9bccd"/>
<line x1="255.5" y1="401" x2="255.5" y2="405" stroke="#a9bccd"/>
<line x1="282.5" y1="401" x2="282.5" y2="405" stroke="#a9bccd"/>
<line x1="309.5" y1="401" x2="309.5" y2="405" stroke="#a9bccd"/>
<line x1="336.5" y1="401" x2="336.5" y2="405" stroke="#a9bccd"/>
<line x1="363.5" y1="401" x2="363.5" y2="405" stroke="#a9bccd"/>
<line x1="391.5" y1="401" x2="391.5" y2="405" stroke="#a9bccd"/>
<line x1="418.5" y1="401" x2="418.5" y2="405" stroke="#a9bccd"/>
<line x1="445.5" y1="401" x2="445.5" y2="405" stroke="#a9bccd"/>
<line x1="472.5" y1="401" x2="472.5" y2="405" stroke="#a9bccd"/>
<line x1="499.5" y1="401" x2="499.5" y2="405" stroke="#a9bccd"/>
<line x1="526.5" y1="401" x2="526.5" y2="405" stroke="#a9bccd"/>
<line x1="553.5" y1="401" x2="553.5" y2="405" stroke="#a9bccd"/>
<line x1="580.5" y1="401" x2="580.5" y2="405" stroke="#a9bccd"/>
<line x1="607.5" y1="401" x2="607.5" y2="405" stroke="#a9bccd"/>
<line x1="634.5" y1="401" x2="634.5" y2="405" stroke="#a9bccd"/>
<line x1="661.5" y1="401" x2="661.5" y2="405" stroke="#a9bccd"/>
<line x1="688.5" y1="401" x2="688.5" y2="405" stroke="#a9bccd"/>
<line x1="715.5" y1="401" x2="715.5" y2="405" stroke="#a9bccd"/>
<line x1="742.5" y1="401" x2="742.5" y2="405" stroke="#a9bccd"/>
<line x1="770.5" y1="401" x2="770.5" y2="405" stroke="#a9bccd"/>
<line x1="797.5" y1="401" x2="797.5" y2="405" stroke="#a9bccd"/>
<line x1="824.5" y1="401" x2="824.5" y2="405" stroke="#a9bccd"/>
<line x1="851.5" y1="401" x2="851.5" y2="405" stroke="#a9bccd"/>
<line x1="878.5" y1="401" x2="878.5" y2="405" stroke="#a9bccd"/>
<text x="907.5" y="56.0" font-family="Liberation Sans, sans-serif" font-size="10.8" textLength="33" lengthAdjust="spacingAndGlyphs" fill="#fcf8f0" stroke="#fcf8f0" stroke-width="0.2">112.00</text>
<text x="907.5" y="83.0" font-family="Liberation Sans, sans-serif" font-size="10.8" textLength="33" lengthAdjust="spacingAndGlyphs" fill="#fcf8f0" stroke="#fcf8f0" stroke-width="0.2">111.00</text>
<text x="907.5" y="110.0" font-family="Liberation Sans, sans-serif" font-size="10.8" textLength="33" lengthAdjust="spacingAndGlyphs" fill="#fcf8f0" stroke="#fcf8f0" stroke-width="0.2">110.00</text>
<text x="907.5" y="137.0" font-family="Liberation Sans, sans-serif" font-size="10.8" textLength="33" lengthAdjust="spacingAndGlyphs" fill="#fcf8f0" stroke="#fcf8f0" stroke-width="0.2">109.00</text>
<text x="907.5" y="164.0" font-family="Liberation Sans, sans-serif" font-size="10.8" textLength="33" lengthAdjust="spacingAndGlyphs" fill="#fcf8f0" stroke="#fcf8f0" stroke-width="0.2">108.00</text>
<text x="907.5" y="192.0" font-family="Liberation Sans, sans-serif" font-size="10.8" textLength="33" lengthAdjust="spacingAndGlyphs" fill="#fcf8f0" stroke="#fcf8f0" stroke-width="0.2">107.00</text>
<text x="907.5" y="246.0" font-family="Liberation Sans, sans-serif" font-size="10.8" textLength="33" lengthAdjust="spacingAndGlyphs" fill="#fcf8f0" stroke="#fcf8f0" stroke-width="0.2">105.00</text>
<rect x="900" y="205" width="48" height="21" fill="#ffffff"/>
<text x="908.5" y="219.2" font-family="Liberation Sans, sans-serif" font-size="10.8" textLength="33" lengthAdjust="spacingAndGlyphs" fill="#403c4c">105.88</text>
<g clip-path="url(#cmacd)">
<rect x="15" y="294.0" width="2" height="2.0" fill="#a42c30"/>
<rect x="20" y="294.0" width="2" height="2.0" fill="#a42c30"/>
<rect x="24" y="294.0" width="2" height="1.9" fill="#a42c30"/>
<rect x="29" y="294.0" width="2" height="1.8" fill="#a42c30"/>
<rect x="33" y="294.0" width="2" height="1.7" fill="#a42c30"/>
<rect x="38" y="294.0" width="2" height="2.3" fill="#a42c30"/>
<rect x="42" y="294.0" width="2" height="2.7" fill="#a42c30"/>
<rect x="47" y="294.0" width="2" height="3.1" fill="#a42c30"/>
<rect x="51" y="294.0" width="2" height="3.5" fill="#a42c30"/>
<rect x="56" y="294.0" width="2" height="3.7" fill="#a42c30"/>
<rect x="60" y="294.0" width="2" height="3.2" fill="#a42c30"/>
<rect x="65" y="294.0" width="2" height="2.7" fill="#a42c30"/>
<rect x="69" y="294.0" width="2" height="2.3" fill="#a42c30"/>
<rect x="74" y="294.0" width="2" height="2.0" fill="#a42c30"/>
<rect x="78" y="294.0" width="2" height="1.6" fill="#a42c30"/>
<rect x="83" y="294.0" width="2" height="1.3" fill="#a42c30"/>
<rect x="87" y="294.0" width="2" height="2.0" fill="#a42c30"/>
<rect x="92" y="294.0" width="2" height="2.9" fill="#a42c30"/>
<rect x="96" y="294.0" width="2" height="3.5" fill="#a42c30"/>
<rect x="101" y="294.0" width="2" height="3.5" fill="#a42c30"/>
<rect x="105" y="294.0" width="2" height="3.4" fill="#a42c30"/>
<rect x="110" y="294.0" width="2" height="3.3" fill="#a42c30"/>
<rect x="114" y="294.0" width="2" height="2.7" fill="#a42c30"/>
<rect x="119" y="294.0" width="2" height="2.2" fill="#a42c30"/>
<rect x="123" y="294.0" width="2" height="1.8" fill="#a42c30"/>
<rect x="128" y="294.0" width="2" height="1.4" fill="#a42c30"/>
<rect x="132" y="294.0" width="2" height="1.0" fill="#a42c30"/>
<rect x="218" y="294.0" width="2" height="1.1" fill="#a42c30"/>
<rect x="223" y="294.0" width="2" height="1.8" fill="#a42c30"/>
<rect x="227" y="294.0" width="2" height="2.5" fill="#a42c30"/>
<rect x="232" y="294.0" width="2" height="3.4" fill="#a42c30"/>
<rect x="236" y="294.0" width="2" height="3.1" fill="#a42c30"/>
<rect x="241" y="294.0" width="2" height="2.8" fill="#a42c30"/>
<rect x="245" y="294.0" width="2" height="1.6" fill="#a42c30"/>
<rect x="263" y="293.2" width="2" height="0.8" fill="#a42c30"/>
<rect x="268" y="292.3" width="2" height="1.7" fill="#a42c30"/>
<rect x="272" y="291.0" width="2" height="3.0" fill="#a42c30"/>
<rect x="277" y="289.6" width="2" height="4.4" fill="#a42c30"/>
<rect x="281" y="288.7" width="2" height="5.3" fill="#a42c30"/>
<rect x="286" y="288.4" width="2" height="5.6" fill="#a42c30"/>
<rect x="290" y="288.1" width="2" height="5.9" fill="#a42c30"/>
<rect x="295" y="287.8" width="2" height="6.2" fill="#a42c30"/>
<rect x="299" y="287.5" width="2" height="6.5" fill="#a42c30"/>
<rect x="304" y="287.5" width="2" height="6.5" fill="#a42c30"/>
<rect x="308" y="288.0" width="2" height="6.0" fill="#a42c30"/>
<rect x="313" y="289.2" width="2" height="4.8" fill="#a42c30"/>
<rect x="317" y="290.4" width="2" height="3.6" fill="#a42c30"/>
<rect x="322" y="291.5" width="2" height="2.5" fill="#a42c30"/>
<rect x="326" y="291.7" width="2" height="2.3" fill="#a42c30"/>
<rect x="331" y="291.9" width="2" height="2.1" fill="#a42c30"/>
<rect x="335" y="292.8" width="2" height="1.2" fill="#a42c30"/>
<rect x="353" y="294.0" width="2" height="0.9" fill="#a42c30"/>
<rect x="358" y="294.0" width="2" height="1.7" fill="#a42c30"/>
<rect x="362" y="294.0" width="2" height="2.5" fill="#a42c30"/>
<rect x="367" y="294.0" width="2" height="3.0" fill="#a42c30"/>
<rect x="371" y="294.0" width="2" height="3.5" fill="#a42c30"/>
<rect x="376" y="294.0" width="2" height="3.5" fill="#a42c30"/>
<rect x="381" y="294.0" width="2" height="3.2" fill="#a42c30"/>
<rect x="385" y="294.0" width="2" height="2.9" fill="#a42c30"/>
<rect x="390" y="294.0" width="2" height="2.8" fill="#a42c30"/>
<rect x="394" y="294.0" width="2" height="2.7" fill="#a42c30"/>
<rect x="399" y="294.0" width="2" height="2.6" fill="#a42c30"/>
<rect x="403" y="294.0" width="2" height="2.5" fill="#a42c30"/>
<rect x="408" y="294.0" width="2" height="2.4" fill="#a42c30"/>
<rect x="412" y="294.0" width="2" height="2.3" fill="#a42c30"/>
<rect x="417" y="294.0" width="2" height="2.1" fill="#a42c30"/>
<rect x="421" y="294.0" width="2" height="1.8" fill="#a42c30"/>
<rect x="426" y="294.0" width="2" height="1.5" fill="#a42c30"/>
<rect x="430" y="294.0" width="2" height="1.2" fill="#a42c30"/>
<rect x="435" y="294.0" width="2" height="0.8" fill="#a42c30"/>
<rect x="457" y="294.0" width="2" height="1.3" fill="#a42c30"/>
<rect x="462" y="294.0" width="2" height="1.8" fill="#a42c30"/>
<rect x="466" y="294.0" width="2" height="2.3" fill="#a42c30"/>
<rect x="471" y="294.0" width="2" height="2.3" fill="#a42c30"/>
<rect x="475" y="294.0" width="2" height="2.0" fill="#a42c30"/>
<rect x="480" y="294.0" width="2" height="1.7" fill="#a42c30"/>
<rect x="484" y="294.0" width="2" height="1.4" fill="#a42c30"/>
<rect x="489" y="294.0" width="2" height="1.2" fill="#a42c30"/>
<rect x="493" y="294.0" width="2" height="1.1" fill="#a42c30"/>
<rect x="498" y="294.0" width="2" height="1.1" fill="#a42c30"/>
<rect x="502" y="294.0" width="2" height="1.0" fill="#a42c30"/>
<rect x="507" y="294.0" width="2" height="1.0" fill="#a42c30"/>
<rect x="511" y="294.0" width="2" height="1.0" fill="#a42c30"/>
<rect x="516" y="294.0" width="2" height="0.9" fill="#a42c30"/>
<rect x="520" y="294.0" width="2" height="0.9" fill="#a42c30"/>
<rect x="525" y="294.0" width="2" height="0.8" fill="#a42c30"/>
<rect x="565" y="292.3" width="2" height="1.7" fill="#a42c30"/>
<rect x="570" y="290.5" width="2" height="3.5" fill="#a42c30"/>
<rect x="575" y="289.1" width="2" height="4.9" fill="#a42c30"/>
<rect x="579" y="287.9" width="2" height="6.1" fill="#a42c30"/>
<rect x="584" y="287.4" width="2" height="6.6" fill="#a42c30"/>
<rect x="588" y="286.9" width="2" height="7.1" fill="#a42c30"/>
<rect x="593" y="286.5" width="2" height="7.5" fill="#a42c30"/>
<rect x="597" y="286.1" width="2" height="7.9" fill="#a42c30"/>
<rect x="602" y="286.0" width="2" height="8.0" fill="#a42c30"/>
<rect x="606" y="286.0" width="2" height="8.0" fill="#a42c30"/>
<rect x="611" y="287.6" width="2" height="6.4" fill="#a42c30"/>
<rect x="615" y="289.8" width="2" height="4.2" fill="#a42c30"/>
<rect x="620" y="292.0" width="2" height="2.0" fill="#a42c30"/>
<rect x="629" y="294.0" width="2" height="1.0" fill="#a42c30"/>
<rect x="633" y="294.0" width="2" height="2.4" fill="#a42c30"/>
<rect x="638" y="294.0" width="2" height="3.3" fill="#a42c30"/>
<rect x="642" y="294.0" width="2" height="4.3" fill="#a42c30"/>
<rect x="647" y="294.0" width="2" height="5.2" fill="#a42c30"/>
<rect x="651" y="294.0" width="2" height="6.8" fill="#a42c30"/>
<rect x="656" y="294.0" width="2" height="8.6" fill="#a42c30"/>
<rect x="660" y="294.0" width="2" height="9.9" fill="#a42c30"/>
<rect x="665" y="294.0" width="2" height="9.4" fill="#a42c30"/>
<rect x="669" y="294.0" width="2" height="8.8" fill="#a42c30"/>
<rect x="674" y="294.0" width="2" height="8.8" fill="#a42c30"/>
<rect x="678" y="294.0" width="2" height="9.4" fill="#a42c30"/>
<rect x="683" y="294.0" width="2" height="10.1" fill="#a42c30"/>
<rect x="687" y="294.0" width="2" height="9.9" fill="#a42c30"/>
<rect x="692" y="294.0" width="2" height="8.7" fill="#a42c30"/>
<rect x="696" y="294.0" width="2" height="7.4" fill="#a42c30"/>
<rect x="701" y="294.0" width="2" height="6.0" fill="#a42c30"/>
<rect x="705" y="294.0" width="2" height="5.0" fill="#a42c30"/>
<rect x="710" y="294.0" width="2" height="4.1" fill="#a42c30"/>
<rect x="714" y="294.0" width="2" height="3.3" fill="#a42c30"/>
<rect x="719" y="294.0" width="2" height="3.0" fill="#a42c30"/>
<rect x="723" y="294.0" width="2" height="3.4" fill="#a42c30"/>
<rect x="728" y="294.0" width="2" height="3.7" fill="#a42c30"/>
<rect x="732" y="294.0" width="2" height="3.4" fill="#a42c30"/>
<rect x="737" y="294.0" width="2" height="3.0" fill="#a42c30"/>
<rect x="741" y="294.0" width="2" height="4.3" fill="#a42c30"/>
<rect x="746" y="294.0" width="2" height="5.8" fill="#a42c30"/>
<rect x="750" y="294.0" width="2" height="7.4" fill="#a42c30"/>
<rect x="755" y="294.0" width="2" height="8.9" fill="#a42c30"/>
<rect x="760" y="294.0" width="2" height="10.3" fill="#a42c30"/>
<rect x="764" y="294.0" width="2" height="11.7" fill="#a42c30"/>
<rect x="769" y="294.0" width="2" height="13.1" fill="#a42c30"/>
<rect x="773" y="294.0" width="2" height="11.6" fill="#a42c30"/>
<rect x="778" y="294.0" width="2" height="10.4" fill="#a42c30"/>
<rect x="782" y="294.0" width="2" height="8.3" fill="#a42c30"/>
<rect x="787" y="294.0" width="2" height="4.4" fill="#a42c30"/>
<rect x="791" y="294.0" width="2" height="1.8" fill="#a42c30"/>
<rect x="796" y="294.0" width="2" height="1.7" fill="#a42c30"/>
<rect x="800" y="294.0" width="2" height="1.7" fill="#a42c30"/>
<rect x="805" y="294.0" width="2" height="1.7" fill="#a42c30"/>
<rect x="809" y="294.0" width="2" height="1.6" fill="#a42c30"/>
<rect x="814" y="294.0" width="2" height="1.6" fill="#a42c30"/>
<rect x="818" y="294.0" width="2" height="1.5" fill="#a42c30"/>
<rect x="823" y="294.0" width="2" height="1.5" fill="#a42c30"/>
<rect x="827" y="294.0" width="2" height="0.9" fill="#a42c30"/>
<rect x="841" y="292.5" width="2" height="1.5" fill="#a42c30"/>
<rect x="845" y="291.9" width="2" height="2.1" fill="#a42c30"/>
<rect x="850" y="291.6" width="2" height="2.4" fill="#a42c30"/>
<rect x="854" y="291.4" width="2" height="2.6" fill="#a42c30"/>
<rect x="859" y="291.3" width="2" height="2.7" fill="#a42c30"/>
<rect x="868" y="294.0" width="2" height="1.1" fill="#a42c30"/>
<rect x="872" y="294.0" width="2" height="2.3" fill="#a42c30"/>
<rect x="877" y="294.0" width="2" height="3.4" fill="#a42c30"/>
<rect x="881" y="294.0" width="2" height="3.8" fill="#a42c30"/>
<path d="M16.0,295.3 C22.3,295.7 28.7,295.8 35.0,296.4 C42.0,297.0 49.0,300.7 56.0,301.0 C65.7,301.4 75.3,301.2 85.0,301.6 C89.0,301.8 93.0,304.6 97.0,305.3 C102.0,306.2 107.0,307.2 112.0,307.2 C119.0,307.2 126.0,307.0 133.0,306.8 C138.3,306.6 143.7,304.4 149.0,303.7 C156.0,302.8 163.0,301.6 170.0,301.6 C180.3,301.6 190.7,302.0 201.0,302.0 C206.0,302.0 211.0,300.0 216.0,300.0 C221.7,300.0 227.3,304.7 233.0,304.7 C236.3,304.7 239.7,304.7 243.0,304.7 C246.0,304.7 249.0,303.3 252.0,302.6 C257.0,301.5 262.0,301.0 267.0,299.5 C271.7,298.1 276.3,293.1 281.0,291.2 C290.0,287.5 299.0,283.7 308.0,282.8 C316.3,282.0 324.7,281.4 333.0,281.4 C340.0,281.4 347.0,282.8 354.0,283.9 C361.0,285.0 368.0,288.4 375.0,289.0 C389.0,290.2 403.0,291.2 417.0,291.2 C427.3,291.2 437.7,289.0 448.0,289.0 C455.0,289.0 462.0,293.5 469.0,293.7 C475.3,293.9 481.7,293.9 488.0,294.0 C508.2,294.3 528.3,294.9 548.5,294.9 C554.0,294.9 559.5,293.1 565.0,291.2 C570.0,289.5 575.0,283.7 580.0,280.8 C589.6,275.1 599.1,266.0 608.7,266.0 C613.3,266.0 618.0,267.8 622.6,269.0 C626.6,270.0 630.7,271.1 634.7,272.7 C639.9,274.7 645.1,277.6 650.3,281.0 C653.8,283.3 657.3,288.1 660.8,289.8 C664.9,291.8 668.9,292.2 673.0,294.0 C677.6,296.1 682.2,302.1 686.8,302.8 C690.2,303.3 693.6,303.5 697.0,303.7 C704.0,304.1 711.0,304.0 718.0,304.5 C721.5,304.7 725.0,306.7 728.5,307.0 C732.0,307.3 735.5,307.2 739.0,307.5 C744.7,308.0 750.3,315.1 756.0,319.3 C760.7,322.8 765.3,329.5 770.0,330.6 C774.0,331.6 778.0,332.3 782.0,332.3 C785.0,332.3 788.0,328.2 791.0,328.0 C802.3,327.4 813.7,327.6 825.0,327.0 C832.0,326.6 839.0,323.1 846.0,321.4 C850.7,320.3 855.3,318.2 860.0,318.2 C864.3,318.2 868.7,321.8 873.0,323.5 C875.7,324.6 878.3,325.6 881.0,326.6" fill="none" stroke="#12124e" stroke-width="1.4"/>
<rect x="15.0" y="291.8" width="3" height="3" rx="1.1" fill="#e42a30"/>
<rect x="20.0" y="292.1" width="3" height="3" rx="1.1" fill="#e42a30"/>
<rect x="24.0" y="292.5" width="3" height="3" rx="1.1" fill="#e42a30"/>
<rect x="29.0" y="292.8" width="3" height="3" rx="1.1" fill="#e42a30"/>
<rect x="33.0" y="293.2" width="3" height="3" rx="1.1" fill="#e42a30"/>
<rect x="38.0" y="293.5" width="3" height="3" rx="1.1" fill="#e42a30"/>
<rect x="42.0" y="294.1" width="3" height="3" rx="1.1" fill="#e42a30"/>
<rect x="47.0" y="294.7" width="3" height="3" rx="1.1" fill="#e42a30"/>
<rect x="51.0" y="295.3" width="3" height="3" rx="1.1" fill="#e42a30"/>
<rect x="56.0" y="295.9" width="3" height="3" rx="1.1" fill="#e42a30"/>
<rect x="60.0" y="296.4" width="3" height="3" rx="1.1" fill="#e42a30"/>
<rect x="65.0" y="297.0" width="3" height="3" rx="1.1" fill="#e42a30"/>
<rect x="69.0" y="297.5" width="3" height="3" rx="1.1" fill="#e42a30"/>
<rect x="74.0" y="297.9" width="3" height="3" rx="1.1" fill="#e42a30"/>
<rect x="78.0" y="298.4" width="3" height="3" rx="1.1" fill="#e42a30"/>
<rect x="83.0" y="298.8" width="3" height="3" rx="1.1" fill="#e42a30"/>
<rect x="87.0" y="299.3" width="3" height="3" rx="1.1" fill="#e42a30"/>
<rect x="92.0" y="299.7" width="3" height="3" rx="1.1" fill="#e42a30"/>
<rect x="96.0" y="300.4" width="3" height="3" rx="1.1" fill="#e42a30"/>
<rect x="101.0" y="301.0" width="3" height="3" rx="1.1" fill="#e42a30"/>
<rect x="105.0" y="301.6" width="3" height="3" rx="1.1" fill="#e42a30"/>
<rect x="110.0" y="302.3" width="3" height="3" rx="1.1" fill="#e42a30"/>
<rect x="114.0" y="302.9" width="3" height="3" rx="1.1" fill="#e42a30"/>
<rect x="119.0" y="303.4" width="3" height="3" rx="1.1" fill="#e42a30"/>
<rect x="123.0" y="303.7" width="3" height="3" rx="1.1" fill="#e42a30"/>
<rect x="128.0" y="304.0" width="3" height="3" rx="1.1" fill="#e42a30"/>
<rect x="132.0" y="304.1" width="3" height="3" rx="1.1" fill="#e42a30"/>
<rect x="137.0" y="303.6" width="3" height="3" rx="1.1" fill="#e42a30"/>
<rect x="141.0" y="303.0" width="3" height="3" rx="1.1" fill="#e42a30"/>
<rect x="146.0" y="302.4" width="3" height="3" rx="1.1" fill="#e42a30"/>
<rect x="150.0" y="301.9" width="3" height="3" rx="1.1" fill="#e42a30"/>
<rect x="155.0" y="301.3" width="3" height="3" rx="1.1" fill="#e42a30"/>
<rect x="159.0" y="300.8" width="3" height="3" rx="1.1" fill="#e42a30"/>
<rect x="164.0" y="300.2" width="3" height="3" rx="1.1" fill="#e42a30"/>
<rect x="168.0" y="299.7" width="3" height="3" rx="1.1" fill="#e42a30"/>
<rect x="173.0" y="299.7" width="3" height="3" rx="1.1" fill="#e42a30"/>
<rect x="177.0" y="299.7" width="3" height="3" rx="1.1" fill="#e42a30"/>
<rect x="182.0" y="299.7" width="3" height="3" rx="1.1" fill="#e42a30"/>
<rect x="186.0" y="299.7" width="3" height="3" rx="1.1" fill="#e42a30"/>
<rect x="191.0" y="299.7" width="3" height="3" rx="1.1" fill="#e42a30"/>
<rect x="196.0" y="299.7" width="3" height="3" rx="1.1" fill="#e42a30"/>
<rect x="200.0" y="299.6" width="3" height="3" rx="1.1" fill="#e42a30"/>
<rect x="205.0" y="299.1" width="3" height="3" rx="1.1" fill="#e42a30"/>
<rect x="209.0" y="298.6" width="3" height="3" rx="1.1" fill="#e42a30"/>
<rect x="214.0" y="298.1" width="3" height="3" rx="1.1" fill="#e42a30"/>
<rect x="218.0" y="298.4" width="3" height="3" rx="1.1" fill="#e42a30"/>
<rect x="223.0" y="298.9" width="3" height="3" rx="1.1" fill="#e42a30"/>
<rect x="227.0" y="299.5" width="3" height="3" rx="1.1" fill="#e42a30"/>
<rect x="232.0" y="299.8" width="3" height="3" rx="1.1" fill="#e42a30"/>
<rect x="236.0" y="300.1" width="3" height="3" rx="1.1" fill="#e42a30"/>
<rect x="241.0" y="300.4" width="3" height="3" rx="1.1" fill="#e42a30"/>
<rect x="245.0" y="300.7" width="3" height="3" rx="1.1" fill="#e42a30"/>
<rect x="250.0" y="301.0" width="3" height="3" rx="1.1" fill="#e42a30"/>
<rect x="254.0" y="300.6" width="3" height="3" rx="1.1" fill="#e42a30"/>
<rect x="259.0" y="300.0" width="3" height="3" rx="1.1" fill="#e42a30"/>
<rect x="263.0" y="299.3" width="3" height="3" rx="1.1" fill="#e42a30"/>
<rect x="268.0" y="298.4" width="3" height="3" rx="1.1" fill="#e42a30"/>
<rect x="272.0" y="297.0" width="3" height="3" rx="1.1" fill="#e42a30"/>
<rect x="277.0" y="295.7" width="3" height="3" rx="1.1" fill="#e42a30"/>
<rect x="281.0" y="294.5" width="3" height="3" rx="1.1" fill="#e42a30"/>
<rect x="286.0" y="293.4" width="3" height="3" rx="1.1" fill="#e42a30"/>
<rect x="290.0" y="292.2" width="3" height="3" rx="1.1" fill="#e42a30"/>
<rect x="295.0" y="291.1" width="3" height="3" rx="1.1" fill="#e42a30"/>
<rect x="299.0" y="290.0" width="3" height="3" rx="1.1" fill="#e42a30"/>
<rect x="304.0" y="288.6" width="3" height="3" rx="1.1" fill="#e42a30"/>
<rect x="308.0" y="287.2" width="3" height="3" rx="1.1" fill="#e42a30"/>
<rect x="313.0" y="285.8" width="3" height="3" rx="1.1" fill="#e42a30"/>
<rect x="317.0" y="284.3" width="3" height="3" rx="1.1" fill="#e42a30"/>
<rect x="322.0" y="283.0" width="3" height="3" rx="1.1" fill="#e42a30"/>
<rect x="326.0" y="282.5" width="3" height="3" rx="1.1" fill="#e42a30"/>
<rect x="331.0" y="282.1" width="3" height="3" rx="1.1" fill="#e42a30"/>
<rect x="335.0" y="281.6" width="3" height="3" rx="1.1" fill="#e42a30"/>
<rect x="340.0" y="281.2" width="3" height="3" rx="1.1" fill="#e42a30"/>
<rect x="344.0" y="281.0" width="3" height="3" rx="1.1" fill="#e42a30"/>
<rect x="349.0" y="281.4" width="3" height="3" rx="1.1" fill="#e42a30"/>
<rect x="353.0" y="281.7" width="3" height="3" rx="1.1" fill="#e42a30"/>
<rect x="358.0" y="282.0" width="3" height="3" rx="1.1" fill="#e42a30"/>
<rect x="362.0" y="282.3" width="3" height="3" rx="1.1" fill="#e42a30"/>
<rect x="367.0" y="282.9" width="3" height="3" rx="1.1" fill="#e42a30"/>
<rect x="371.0" y="283.5" width="3" height="3" rx="1.1" fill="#e42a30"/>
<rect x="376.0" y="284.1" width="3" height="3" rx="1.1" fill="#e42a30"/>
<rect x="381.0" y="284.7" width="3" height="3" rx="1.1" fill="#e42a30"/>
<rect x="385.0" y="285.2" width="3" height="3" rx="1.1" fill="#e42a30"/>
<rect x="390.0" y="285.6" width="3" height="3" rx="1.1" fill="#e42a30"/>
<rect x="394.0" y="285.9" width="3" height="3" rx="1.1" fill="#e42a30"/>
<rect x="399.0" y="286.2" width="3" height="3" rx="1.1" fill="#e42a30"/>
<rect x="403.0" y="286.6" width="3" height="3" rx="1.1" fill="#e42a30"/>
<rect x="408.0" y="286.9" width="3" height="3" rx="1.1" fill="#e42a30"/>
<rect x="412.0" y="287.2" width="3" height="3" rx="1.1" fill="#e42a30"/>
<rect x="417.0" y="287.5" width="3" height="3" rx="1.1" fill="#e42a30"/>
<rect x="421.0" y="287.5" width="3" height="3" rx="1.1" fill="#e42a30"/>
<rect x="426.0" y="287.5" width="3" height="3" rx="1.1" fill="#e42a30"/>
<rect x="430.0" y="287.5" width="3" height="3" rx="1.1" fill="#e42a30"/>
<rect x="435.0" y="287.5" width="3" height="3" rx="1.1" fill="#e42a30"/>
<rect x="439.0" y="287.5" width="3" height="3" rx="1.1" fill="#e42a30"/>
<rect x="444.0" y="287.5" width="3" height="3" rx="1.1" fill="#e42a30"/>
<rect x="448.0" y="287.7" width="3" height="3" rx="1.1" fill="#e42a30"/>
<rect x="453.0" y="288.1" width="3" height="3" rx="1.1" fill="#e42a30"/>
<rect x="457.0" y="288.6" width="3" height="3" rx="1.1" fill="#e42a30"/>
<rect x="462.0" y="289.1" width="3" height="3" rx="1.1" fill="#e42a30"/>
<rect x="466.0" y="289.6" width="3" height="3" rx="1.1" fill="#e42a30"/>
<rect x="471.0" y="290.0" width="3" height="3" rx="1.1" fill="#e42a30"/>
<rect x="475.0" y="290.4" width="3" height="3" rx="1.1" fill="#e42a30"/>
<rect x="480.0" y="290.7" width="3" height="3" rx="1.1" fill="#e42a30"/>
<rect x="484.0" y="291.1" width="3" height="3" rx="1.1" fill="#e42a30"/>
<rect x="489.0" y="291.4" width="3" height="3" rx="1.1" fill="#e42a30"/>
<rect x="493.0" y="291.5" width="3" height="3" rx="1.1" fill="#e42a30"/>
<rect x="498.0" y="291.6" width="3" height="3" rx="1.1" fill="#e42a30"/>
<rect x="502.0" y="291.7" width="3" height="3" rx="1.1" fill="#e42a30"/>
<rect x="507.0" y="291.8" width="3" height="3" rx="1.1" fill="#e42a30"/>
<rect x="511.0" y="291.9" width="3" height="3" rx="1.1" fill="#e42a30"/>
<rect x="516.0" y="292.0" width="3" height="3" rx="1.1" fill="#e42a30"/>
<rect x="520.0" y="292.1" width="3" height="3" rx="1.1" fill="#e42a30"/>
<rect x="525.0" y="292.3" width="3" height="3" rx="1.1" fill="#e42a30"/>
<rect x="529.0" y="292.4" width="3" height="3" rx="1.1" fill="#e42a30"/>
<rect x="534.0" y="292.5" width="3" height="3" rx="1.1" fill="#e42a30"/>
<rect x="538.0" y="292.6" width="3" height="3" rx="1.1" fill="#e42a30"/>
<rect x="543.0" y="292.7" width="3" height="3" rx="1.1" fill="#e42a30"/>
<rect x="547.0" y="292.7" width="3" height="3" rx="1.1" fill="#e42a30"/>
<rect x="552.0" y="292.1" width="3" height="3" rx="1.1" fill="#e42a30"/>
<rect x="556.0" y="291.4" width="3" height="3" rx="1.1" fill="#e42a30"/>
<rect x="561.0" y="290.7" width="3" height="3" rx="1.1" fill="#e42a30"/>
<rect x="565.0" y="290.0" width="3" height="3" rx="1.1" fill="#e42a30"/>
<rect x="570.0" y="288.7" width="3" height="3" rx="1.1" fill="#e42a30"/>
<rect x="575.0" y="286.9" width="3" height="3" rx="1.1" fill="#e42a30"/>
<rect x="579.0" y="285.1" width="3" height="3" rx="1.1" fill="#e42a30"/>
<rect x="584.0" y="283.3" width="3" height="3" rx="1.1" fill="#e42a30"/>
<rect x="588.0" y="281.5" width="3" height="3" rx="1.1" fill="#e42a30"/>
<rect x="593.0" y="279.6" width="3" height="3" rx="1.1" fill="#e42a30"/>
<rect x="597.0" y="277.6" width="3" height="3" rx="1.1" fill="#e42a30"/>
<rect x="602.0" y="275.4" width="3" height="3" rx="1.1" fill="#e42a30"/>
<rect x="606.0" y="273.1" width="3" height="3" rx="1.1" fill="#e42a30"/>
<rect x="611.0" y="271.6" width="3" height="3" rx="1.1" fill="#e42a30"/>
<rect x="615.0" y="270.4" width="3" height="3" rx="1.1" fill="#e42a30"/>
<rect x="620.0" y="269.2" width="3" height="3" rx="1.1" fill="#e42a30"/>
<rect x="624.0" y="268.8" width="3" height="3" rx="1.1" fill="#e42a30"/>
<rect x="629.0" y="268.8" width="3" height="3" rx="1.1" fill="#e42a30"/>
<rect x="633.0" y="268.8" width="3" height="3" rx="1.1" fill="#e42a30"/>
<rect x="638.0" y="270.3" width="3" height="3" rx="1.1" fill="#e42a30"/>
<rect x="642.0" y="271.7" width="3" height="3" rx="1.1" fill="#e42a30"/>
<rect x="647.0" y="273.2" width="3" height="3" rx="1.1" fill="#e42a30"/>
<rect x="651.0" y="274.7" width="3" height="3" rx="1.1" fill="#e42a30"/>
<rect x="656.0" y="276.7" width="3" height="3" rx="1.1" fill="#e42a30"/>
<rect x="660.0" y="278.8" width="3" height="3" rx="1.1" fill="#e42a30"/>
<rect x="665.0" y="280.8" width="3" height="3" rx="1.1" fill="#e42a30"/>
<rect x="669.0" y="282.9" width="3" height="3" rx="1.1" fill="#e42a30"/>
<rect x="674.0" y="285.1" width="3" height="3" rx="1.1" fill="#e42a30"/>
<rect x="678.0" y="287.4" width="3" height="3" rx="1.1" fill="#e42a30"/>
<rect x="683.0" y="289.7" width="3" height="3" rx="1.1" fill="#e42a30"/>
<rect x="687.0" y="291.6" width="3" height="3" rx="1.1" fill="#e42a30"/>
<rect x="692.0" y="293.2" width="3" height="3" rx="1.1" fill="#e42a30"/>
<rect x="696.0" y="294.8" width="3" height="3" rx="1.1" fill="#e42a30"/>
<rect x="701.0" y="296.4" width="3" height="3" rx="1.1" fill="#e42a30"/>
<rect x="705.0" y="297.6" width="3" height="3" rx="1.1" fill="#e42a30"/>
<rect x="710.0" y="298.6" width="3" height="3" rx="1.1" fill="#e42a30"/>
<rect x="714.0" y="299.6" width="3" height="3" rx="1.1" fill="#e42a30"/>
<rect x="719.0" y="300.6" width="3" height="3" rx="1.1" fill="#e42a30"/>
<rect x="723.0" y="301.2" width="3" height="3" rx="1.1" fill="#e42a30"/>
<rect x="728.0" y="301.8" width="3" height="3" rx="1.1" fill="#e42a30"/>
<rect x="732.0" y="302.4" width="3" height="3" rx="1.1" fill="#e42a30"/>
<rect x="737.0" y="302.9" width="3" height="3" rx="1.1" fill="#e42a30"/>
<rect x="741.0" y="304.4" width="3" height="3" rx="1.1" fill="#e42a30"/>
<rect x="746.0" y="306.0" width="3" height="3" rx="1.1" fill="#e42a30"/>
<rect x="750.0" y="307.7" width="3" height="3" rx="1.1" fill="#e42a30"/>
<rect x="755.0" y="309.3" width="3" height="3" rx="1.1" fill="#e42a30"/>
<rect x="760.0" y="311.6" width="3" height="3" rx="1.1" fill="#e42a30"/>
<rect x="764.0" y="313.8" width="3" height="3" rx="1.1" fill="#e42a30"/>
<rect x="769.0" y="316.0" width="3" height="3" rx="1.1" fill="#e42a30"/>
<rect x="773.0" y="318.2" width="3" height="3" rx="1.1" fill="#e42a30"/>
<rect x="778.0" y="320.0" width="3" height="3" rx="1.1" fill="#e42a30"/>
<rect x="782.0" y="321.8" width="3" height="3" rx="1.1" fill="#e42a30"/>
<rect x="787.0" y="323.5" width="3" height="3" rx="1.1" fill="#e42a30"/>
<rect x="791.0" y="324.7" width="3" height="3" rx="1.1" fill="#e42a30"/>
<rect x="796.0" y="324.6" width="3" height="3" rx="1.1" fill="#e42a30"/>
<rect x="800.0" y="324.5" width="3" height="3" rx="1.1" fill="#e42a30"/>
<rect x="805.0" y="324.4" width="3" height="3" rx="1.1" fill="#e42a30"/>
<rect x="809.0" y="324.3" width="3" height="3" rx="1.1" fill="#e42a30"/>
<rect x="814.0" y="324.2" width="3" height="3" rx="1.1" fill="#e42a30"/>
<rect x="818.0" y="324.1" width="3" height="3" rx="1.1" fill="#e42a30"/>
<rect x="823.0" y="324.0" width="3" height="3" rx="1.1" fill="#e42a30"/>
<rect x="827.0" y="323.6" width="3" height="3" rx="1.1" fill="#e42a30"/>
<rect x="832.0" y="323.2" width="3" height="3" rx="1.1" fill="#e42a30"/>
<rect x="836.0" y="322.8" width="3" height="3" rx="1.1" fill="#e42a30"/>
<rect x="841.0" y="322.4" width="3" height="3" rx="1.1" fill="#e42a30"/>
<rect x="845.0" y="321.9" width="3" height="3" rx="1.1" fill="#e42a30"/>
<rect x="850.0" y="321.1" width="3" height="3" rx="1.1" fill="#e42a30"/>
<rect x="854.0" y="320.3" width="3" height="3" rx="1.1" fill="#e42a30"/>
<rect x="859.0" y="319.5" width="3" height="3" rx="1.1" fill="#e42a30"/>
<rect x="863.0" y="318.8" width="3" height="3" rx="1.1" fill="#e42a30"/>
<rect x="868.0" y="319.4" width="3" height="3" rx="1.1" fill="#e42a30"/>
<rect x="872.0" y="320.1" width="3" height="3" rx="1.1" fill="#e42a30"/>
<rect x="877.0" y="320.7" width="3" height="3" rx="1.1" fill="#e42a30"/>
<rect x="881.0" y="321.3" width="3" height="3" rx="1.1" fill="#e42a30"/>
</g>
<text x="18.3" y="275" font-family="Liberation Sans, sans-serif" font-size="11.2" textLength="29" lengthAdjust="spacingAndGlyphs" fill="#16186a">MACD</text>
<text x="908" y="301" font-family="Liberation Sans, sans-serif" font-size="11.2" fill="#fcf8f0" stroke="#fcf8f0" stroke-width="0.15">+0</text>
<g clip-path="url(#crsi)">
<g clip-path="url(#cband)"><polygon points="16.0,387.0 16.0,372.4 24.0,374.5 35.0,376.5 56.0,376.5 76.0,376.5 80.0,379.0 85.0,387.0 89.0,389.5 92.0,387.5 106.0,388.5 120.0,391.0 123.0,387.0 127.0,385.3 130.0,385.8 135.3,378.7 139.1,376.3 143.0,378.7 147.7,378.7 151.5,375.6 157.2,378.7 161.0,377.2 164.9,375.3 169.7,378.7 174.4,380.6 179.2,382.5 185.0,383.4 189.7,385.3 193.5,385.3 201.2,372.9 207.9,372.9 214.6,376.7 219.3,385.3 223.2,388.2 227.0,384.4 228.0,384.9 251.0,376.5 256.0,376.5 264.6,368.2 277.0,359.9 283.0,362.0 293.8,358.8 300.0,358.5 304.0,357.2 318.0,355.2 321.0,357.6 323.5,359.2 329.0,357.0 333.0,357.2 335.0,360.4 337.5,360.5 346.0,359.9 354.0,364.0 363.5,370.3 375.0,367.2 385.0,368.2 396.0,364.0 404.0,364.7 412.5,369.2 421.0,366.8 427.0,358.8 431.0,366.1 439.6,362.6 446.0,370.3 458.0,375.0 466.7,372.4 473.0,370.9 479.0,373.4 485.0,371.3 490.0,373.0 500.6,374.5 506.8,370.9 519.0,367.6 527.7,375.5 538.0,375.0 552.7,368.2 562.0,358.8 571.4,346.8 580.8,348.4 592.0,344.2 599.5,348.0 606.8,347.4 616.0,357.2 621.4,355.7 631.8,366.1 638.0,365.0 648.5,370.3 652.7,380.7 663.0,375.5 669.3,379.7 675.6,377.2 681.8,382.8 694.3,377.2 702.7,376.5 710.4,380.7 727.0,383.0 733.3,377.2 742.7,384.9 748.0,388.0 756.0,389.0 766.7,394.2 775.0,396.0 833.3,380.7 841.7,382.8 848.0,380.7 854.0,380.7 864.6,385.5 866.7,387.0 872.9,391.8 879.0,387.4 881.7,388.4 881.7,387.0" fill="url(#rsifill)"/></g>
<rect x="16" y="358.3" width="866" height="1.4" fill="#2222a8"/>
<rect x="16" y="386.1" width="866" height="1.4" fill="#2222a8"/>
<clipPath id="rA"><rect x="0" y="0" width="1152" height="359"/></clipPath>
<clipPath id="rB"><rect x="0" y="359" width="1152" height="28"/></clipPath>
<clipPath id="rC"><rect x="0" y="387" width="1152" height="30"/></clipPath>
<polyline points="16.0,372.4 24.0,374.5 35.0,376.5 56.0,376.5 76.0,376.5 80.0,379.0 85.0,387.0 89.0,389.5 92.0,387.5 106.0,388.5 120.0,391.0 123.0,387.0 127.0,385.3 130.0,385.8 135.3,378.7 139.1,376.3 143.0,378.7 147.7,378.7 151.5,375.6 157.2,378.7 161.0,377.2 164.9,375.3 169.7,378.7 174.4,380.6 179.2,382.5 185.0,383.4 189.7,385.3 193.5,385.3 201.2,372.9 207.9,372.9 214.6,376.7 219.3,385.3 223.2,388.2 227.0,384.4 228.0,384.9 251.0,376.5 256.0,376.5 264.6,368.2 277.0,359.9 283.0,362.0 293.8,358.8 300.0,358.5 304.0,357.2 318.0,355.2 321.0,357.6 323.5,359.2 329.0,357.0 333.0,357.2 335.0,360.4 337.5,360.5 346.0,359.9 354.0,364.0 363.5,370.3 375.0,367.2 385.0,368.2 396.0,364.0 404.0,364.7 412.5,369.2 421.0,366.8 427.0,358.8 431.0,366.1 439.6,362.6 446.0,370.3 458.0,375.0 466.7,372.4 473.0,370.9 479.0,373.4 485.0,371.3 490.0,373.0 500.6,374.5 506.8,370.9 519.0,367.6 527.7,375.5 538.0,375.0 552.7,368.2 562.0,358.8 571.4,346.8 580.8,348.4 592.0,344.2 599.5,348.0 606.8,347.4 616.0,357.2 621.4,355.7 631.8,366.1 638.0,365.0 648.5,370.3 652.7,380.7 663.0,375.5 669.3,379.7 675.6,377.2 681.8,382.8 694.3,377.2 702.7,376.5 710.4,380.7 727.0,383.0 733.3,377.2 742.7,384.9 748.0,388.0 756.0,389.0 766.7,394.2 775.0,396.0 833.3,380.7 841.7,382.8 848.0,380.7 854.0,380.7 864.6,385.5 866.7,387.0 872.9,391.8 879.0,387.4 881.7,388.4" fill="none" stroke="#c040d8" stroke-width="1" clip-path="url(#rA)"/>
<polyline points="16.0,372.4 24.0,374.5 35.0,376.5 56.0,376.5 76.0,376.5 80.0,379.0 85.0,387.0 89.0,389.5 92.0,387.5 106.0,388.5 120.0,391.0 123.0,387.0 127.0,385.3 130.0,385.8 135.3,378.7 139.1,376.3 143.0,378.7 147.7,378.7 151.5,375.6 157.2,378.7 161.0,377.2 164.9,375.3 169.7,378.7 174.4,380.6 179.2,382.5 185.0,383.4 189.7,385.3 193.5,385.3 201.2,372.9 207.9,372.9 214.6,376.7 219.3,385.3 223.2,388.2 227.0,384.4 228.0,384.9 251.0,376.5 256.0,376.5 264.6,368.2 277.0,359.9 283.0,362.0 293.8,358.8 300.0,358.5 304.0,357.2 318.0,355.2 321.0,357.6 323.5,359.2 329.0,357.0 333.0,357.2 335.0,360.4 337.5,360.5 346.0,359.9 354.0,364.0 363.5,370.3 375.0,367.2 385.0,368.2 396.0,364.0 404.0,364.7 412.5,369.2 421.0,366.8 427.0,358.8 431.0,366.1 439.6,362.6 446.0,370.3 458.0,375.0 466.7,372.4 473.0,370.9 479.0,373.4 485.0,371.3 490.0,373.0 500.6,374.5 506.8,370.9 519.0,367.6 527.7,375.5 538.0,375.0 552.7,368.2 562.0,358.8 571.4,346.8 580.8,348.4 592.0,344.2 599.5,348.0 606.8,347.4 616.0,357.2 621.4,355.7 631.8,366.1 638.0,365.0 648.5,370.3 652.7,380.7 663.0,375.5 669.3,379.7 675.6,377.2 681.8,382.8 694.3,377.2 702.7,376.5 710.4,380.7 727.0,383.0 733.3,377.2 742.7,384.9 748.0,388.0 756.0,389.0 766.7,394.2 775.0,396.0 833.3,380.7 841.7,382.8 848.0,380.7 854.0,380.7 864.6,385.5 866.7,387.0 872.9,391.8 879.0,387.4 881.7,388.4" fill="none" stroke="#e8902e" stroke-width="1" clip-path="url(#rB)"/>
<polyline points="16.0,372.4 24.0,374.5 35.0,376.5 56.0,376.5 76.0,376.5 80.0,379.0 85.0,387.0 89.0,389.5 92.0,387.5 106.0,388.5 120.0,391.0 123.0,387.0 127.0,385.3 130.0,385.8 135.3,378.7 139.1,376.3 143.0,378.7 147.7,378.7 151.5,375.6 157.2,378.7 161.0,377.2 164.9,375.3 169.7,378.7 174.4,380.6 179.2,382.5 185.0,383.4 189.7,385.3 193.5,385.3 201.2,372.9 207.9,372.9 214.6,376.7 219.3,385.3 223.2,388.2 227.0,384.4 228.0,384.9 251.0,376.5 256.0,376.5 264.6,368.2 277.0,359.9 283.0,362.0 293.8,358.8 300.0,358.5 304.0,357.2 318.0,355.2 321.0,357.6 323.5,359.2 329.0,357.0 333.0,357.2 335.0,360.4 337.5,360.5 346.0,359.9 354.0,364.0 363.5,370.3 375.0,367.2 385.0,368.2 396.0,364.0 404.0,364.7 412.5,369.2 421.0,366.8 427.0,358.8 431.0,366.1 439.6,362.6 446.0,370.3 458.0,375.0 466.7,372.4 473.0,370.9 479.0,373.4 485.0,371.3 490.0,373.0 500.6,374.5 506.8,370.9 519.0,367.6 527.7,375.5 538.0,375.0 552.7,368.2 562.0,358.8 571.4,346.8 580.8,348.4 592.0,344.2 599.5,348.0 606.8,347.4 616.0,357.2 621.4,355.7 631.8,366.1 638.0,365.0 648.5,370.3 652.7,380.7 663.0,375.5 669.3,379.7 675.6,377.2 681.8,382.8 694.3,377.2 702.7,376.5 710.4,380.7 727.0,383.0 733.3,377.2 742.7,384.9 748.0,388.0 756.0,389.0 766.7,394.2 775.0,396.0 833.3,380.7 841.7,382.8 848.0,380.7 854.0,380.7 864.6,385.5 866.7,387.0 872.9,391.8 879.0,387.4 881.7,388.4" fill="none" stroke="#2ed02e" stroke-width="1" clip-path="url(#rC)"/>
</g>
<text x="18.3" y="353" font-family="Liberation Sans, sans-serif" font-size="11" textLength="14.8" lengthAdjust="spacingAndGlyphs" fill="#e8923a">RSI</text>
<text x="908" y="380" font-family="Liberation Sans, sans-serif" font-size="11.2" fill="#fcf8f0" stroke="#fcf8f0" stroke-width="0.15">50</text>
<rect x="16.0" y="378" width="2" height="27" fill="#cdeff0"/>
<path d="M17.5,378.5 H75.0 L77.0,380.5 V395.5 L75.0,397.5 H17.5 Z" fill="#5c6b7e" stroke="#c6dde6" stroke-width="1"/>
<text x="24.0" y="392" font-family="Liberation Sans, sans-serif" font-size="11" fill="#ffffff">Янв 2020</text>
<rect x="228.0" y="378" width="2" height="27" fill="#cdeff0"/>
<path d="M229.5,378.5 H288.0 L290.0,380.5 V395.5 L288.0,397.5 H229.5 Z" fill="#5c6b7e" stroke="#c6dde6" stroke-width="1"/>
<text x="236.0" y="392" font-family="Liberation Sans, sans-serif" font-size="11" fill="#ffffff">Фев 2020</text>
<rect x="770.0" y="378" width="2" height="27" fill="#cdeff0"/>
<path d="M771.5,378.5 H831.0 L833.0,380.5 V395.5 L831.0,397.5 H771.5 Z" fill="#5c6b7e" stroke="#c6dde6" stroke-width="1"/>
<text x="778.0" y="392" font-family="Liberation Sans, sans-serif" font-size="11" fill="#ffffff">Мар 2020</text>
<text x="38.7" y="424" font-family="Liberation Sans, sans-serif" font-size="11.2" fill="#fcf8f0" stroke="#fcf8f0" stroke-width="0.15" text-anchor="middle">23</text>
<text x="65.7" y="424" font-family="Liberation Sans, sans-serif" font-size="11.2" fill="#fcf8f0" stroke="#fcf8f0" stroke-width="0.15" text-anchor="middle">24</text>
<text x="92.7" y="424" font-family="Liberation Sans, sans-serif" font-size="11.2" fill="#fcf8f0" stroke="#fcf8f0" stroke-width="0.15" text-anchor="middle">27</text>
<text x="119.7" y="424" font-family="Liberation Sans, sans-serif" font-size="11.2" fill="#fcf8f0" stroke="#fcf8f0" stroke-width="0.15" text-anchor="middle">28</text>
<text x="146.7" y="424" font-family="Liberation Sans, sans-serif" font-size="11.2" fill="#fcf8f0" stroke="#fcf8f0" stroke-width="0.15" text-anchor="middle">29</text>
<text x="173.7" y="424" font-family="Liberation Sans, sans-serif" font-size="11.2" fill="#fcf8f0" stroke="#fcf8f0" stroke-width="0.15" text-anchor="middle">30</text>
<text x="200.7" y="424" font-family="Liberation Sans, sans-serif" font-size="11.2" fill="#fcf8f0" stroke="#fcf8f0" stroke-width="0.15" text-anchor="middle">31</text>
<text x="227.7" y="424" font-family="Liberation Sans, sans-serif" font-size="11.2" fill="#fcf8f0" stroke="#fcf8f0" stroke-width="0.15" text-anchor="middle">3</text>
<text x="254.7" y="424" font-family="Liberation Sans, sans-serif" font-size="11.2" fill="#fcf8f0" stroke="#fcf8f0" stroke-width="0.15" text-anchor="middle">4</text>
<text x="281.7" y="424" font-family="Liberation Sans, sans-serif" font-size="11.2" fill="#fcf8f0" stroke="#fcf8f0" stroke-width="0.15" text-anchor="middle">5</text>
<text x="308.7" y="424" font-family="Liberation Sans, sans-serif" font-size="11.2" fill="#fcf8f0" stroke="#fcf8f0" stroke-width="0.15" text-anchor="middle">6</text>
<text x="335.7" y="424" font-family="Liberation Sans, sans-serif" font-size="11.2" fill="#fcf8f0" stroke="#fcf8f0" stroke-width="0.15" text-anchor="middle">7</text>
<text x="362.7" y="424" font-family="Liberation Sans, sans-serif" font-size="11.2" fill="#fcf8f0" stroke="#fcf8f0" stroke-width="0.15" text-anchor="middle">10</text>
<text x="390.7" y="424" font-family="Liberation Sans, sans-serif" font-size="11.2" fill="#fcf8f0" stroke="#fcf8f0" stroke-width="0.15" text-anchor="middle">11</text>
<text x="417.7" y="424" font-family="Liberation Sans, sans-serif" font-size="11.2" fill="#fcf8f0" stroke="#fcf8f0" stroke-width="0.15" text-anchor="middle">12</text>
<text x="444.7" y="424" font-family="Liberation Sans, sans-serif" font-size="11.2" fill="#fcf8f0" stroke="#fcf8f0" stroke-width="0.15" text-anchor="middle">13</text>
<text x="471.7" y="424" font-family="Liberation Sans, sans-serif" font-size="11.2" fill="#fcf8f0" stroke="#fcf8f0" stroke-width="0.15" text-anchor="middle">14</text>
<text x="498.7" y="424" font-family="Liberation Sans, sans-serif" font-size="11.2" fill="#fcf8f0" stroke="#fcf8f0" stroke-width="0.15" text-anchor="middle">17</text>
<text x="525.7" y="424" font-family="Liberation Sans, sans-serif" font-size="11.2" fill="#fcf8f0" stroke="#fcf8f0" stroke-width="0.15" text-anchor="middle">18</text>
<text x="552.7" y="424" font-family="Liberation Sans, sans-serif" font-size="11.2" fill="#fcf8f0" stroke="#fcf8f0" stroke-width="0.15" text-anchor="middle">19</text>
<text x="579.7" y="424" font-family="Liberation Sans, sans-serif" font-size="11.2" fill="#fcf8f0" stroke="#fcf8f0" stroke-width="0.15" text-anchor="middle">20</text>
<text x="606.7" y="424" font-family="Liberation Sans, sans-serif" font-size="11.2" fill="#fcf8f0" stroke="#fcf8f0" stroke-width="0.15" text-anchor="middle">21</text>
<text x="633.7" y="424" font-family="Liberation Sans, sans-serif" font-size="11.2" fill="#fcf8f0" stroke="#fcf8f0" stroke-width="0.15" text-anchor="middle">24</text>
<text x="660.7" y="424" font-family="Liberation Sans, sans-serif" font-size="11.2" fill="#fcf8f0" stroke="#fcf8f0" stroke-width="0.15" text-anchor="middle">25</text>
<text x="687.7" y="424" font-family="Liberation Sans, sans-serif" font-size="11.2" fill="#fcf8f0" stroke="#fcf8f0" stroke-width="0.15" text-anchor="middle">26</text>
<text x="714.7" y="424" font-family="Liberation Sans, sans-serif" font-size="11.2" fill="#fcf8f0" stroke="#fcf8f0" stroke-width="0.15" text-anchor="middle">27</text>
<text x="741.7" y="424" font-family="Liberation Sans, sans-serif" font-size="11.2" fill="#fcf8f0" stroke="#fcf8f0" stroke-width="0.15" text-anchor="middle">28</text>
<text x="769.7" y="424" font-family="Liberation Sans, sans-serif" font-size="11.2" fill="#fcf8f0" stroke="#fcf8f0" stroke-width="0.15" text-anchor="middle">2</text>
<text x="796.7" y="424" font-family="Liberation Sans, sans-serif" font-size="11.2" fill="#fcf8f0" stroke="#fcf8f0" stroke-width="0.15" text-anchor="middle">3</text>
<text x="823.7" y="424" font-family="Liberation Sans, sans-serif" font-size="11.2" fill="#fcf8f0" stroke="#fcf8f0" stroke-width="0.15" text-anchor="middle">4</text>
<text x="850.7" y="424" font-family="Liberation Sans, sans-serif" font-size="11.2" fill="#fcf8f0" stroke="#fcf8f0" stroke-width="0.15" text-anchor="middle">5</text>
<text x="877.7" y="424" font-family="Liberation Sans, sans-serif" font-size="11.2" fill="#fcf8f0" stroke="#fcf8f0" stroke-width="0.15" text-anchor="middle">6</text>
<text x="28.5" y="19.6" font-family="Liberation Sans, sans-serif" font-size="11.8" xml:space="preserve" textLength="138.5" lengthAdjust="spacingAndGlyphs" fill="#4c4c5a">График USD /JPY  4 ЧАСА</text>
<path d="M9.5,8 V21.5 H24" fill="none" stroke="#465a6c" stroke-width="1"/>
<path d="M8,10 L9.5,7.5 L11,10" fill="none" stroke="#465a6c" stroke-width="1"/>
<path d="M21.5,20 L24,21.5 L21.5,23" fill="none" stroke="#465a6c" stroke-width="1"/>
<line x1="13.5" y1="12" x2="13.5" y2="20" stroke="#2e5a3a"/><rect x="12.5" y="14.5" width="2" height="3.5" fill="#7ab080" stroke="#2e5a3a" stroke-width="0.7"/>
<line x1="17.5" y1="7" x2="17.5" y2="17" stroke="#2e5a3a"/><rect x="16.5" y="9.5" width="2" height="5" fill="#7ab080" stroke="#2e5a3a" stroke-width="0.7"/>
<line x1="21.5" y1="10" x2="21.5" y2="19" stroke="#6a2a38"/><rect x="20.5" y="12.5" width="2" height="4.5" fill="#b06070" stroke="#6a2a38" stroke-width="0.7"/>
<rect x="857.5" y="7.5" width="30" height="16" rx="2" fill="url(#btn)" stroke="#8a9aac" stroke-width="1"/>
<rect x="890.5" y="7.5" width="30" height="16" rx="2" fill="url(#btn)" stroke="#8a9aac" stroke-width="1"/>
<rect x="923.5" y="7.5" width="30" height="16" rx="2" fill="url(#btn)" stroke="#8a9aac" stroke-width="1"/>
<rect x="867.5" y="14.5" width="10" height="4" rx="1" fill="#f6f8fa" stroke="#4a5058" stroke-width="1"/>
<rect x="900.5" y="11.5" width="10" height="8" rx="1" fill="#f6f8fa" stroke="#4a5058" stroke-width="1"/>
<rect x="903.5" y="14.5" width="4" height="2" fill="#f6f8fa" stroke="#4a5058" stroke-width="1"/>
<path d="M935,12 L942,18.6 M942,12 L935,18.6" stroke="#4a5058" stroke-width="3.8" stroke-linecap="round"/>
<path d="M935,12 L942,18.6 M942,12 L935,18.6" stroke="#f6f8fa" stroke-width="1.9" stroke-linecap="round"/>
</svg>
</body></html>
